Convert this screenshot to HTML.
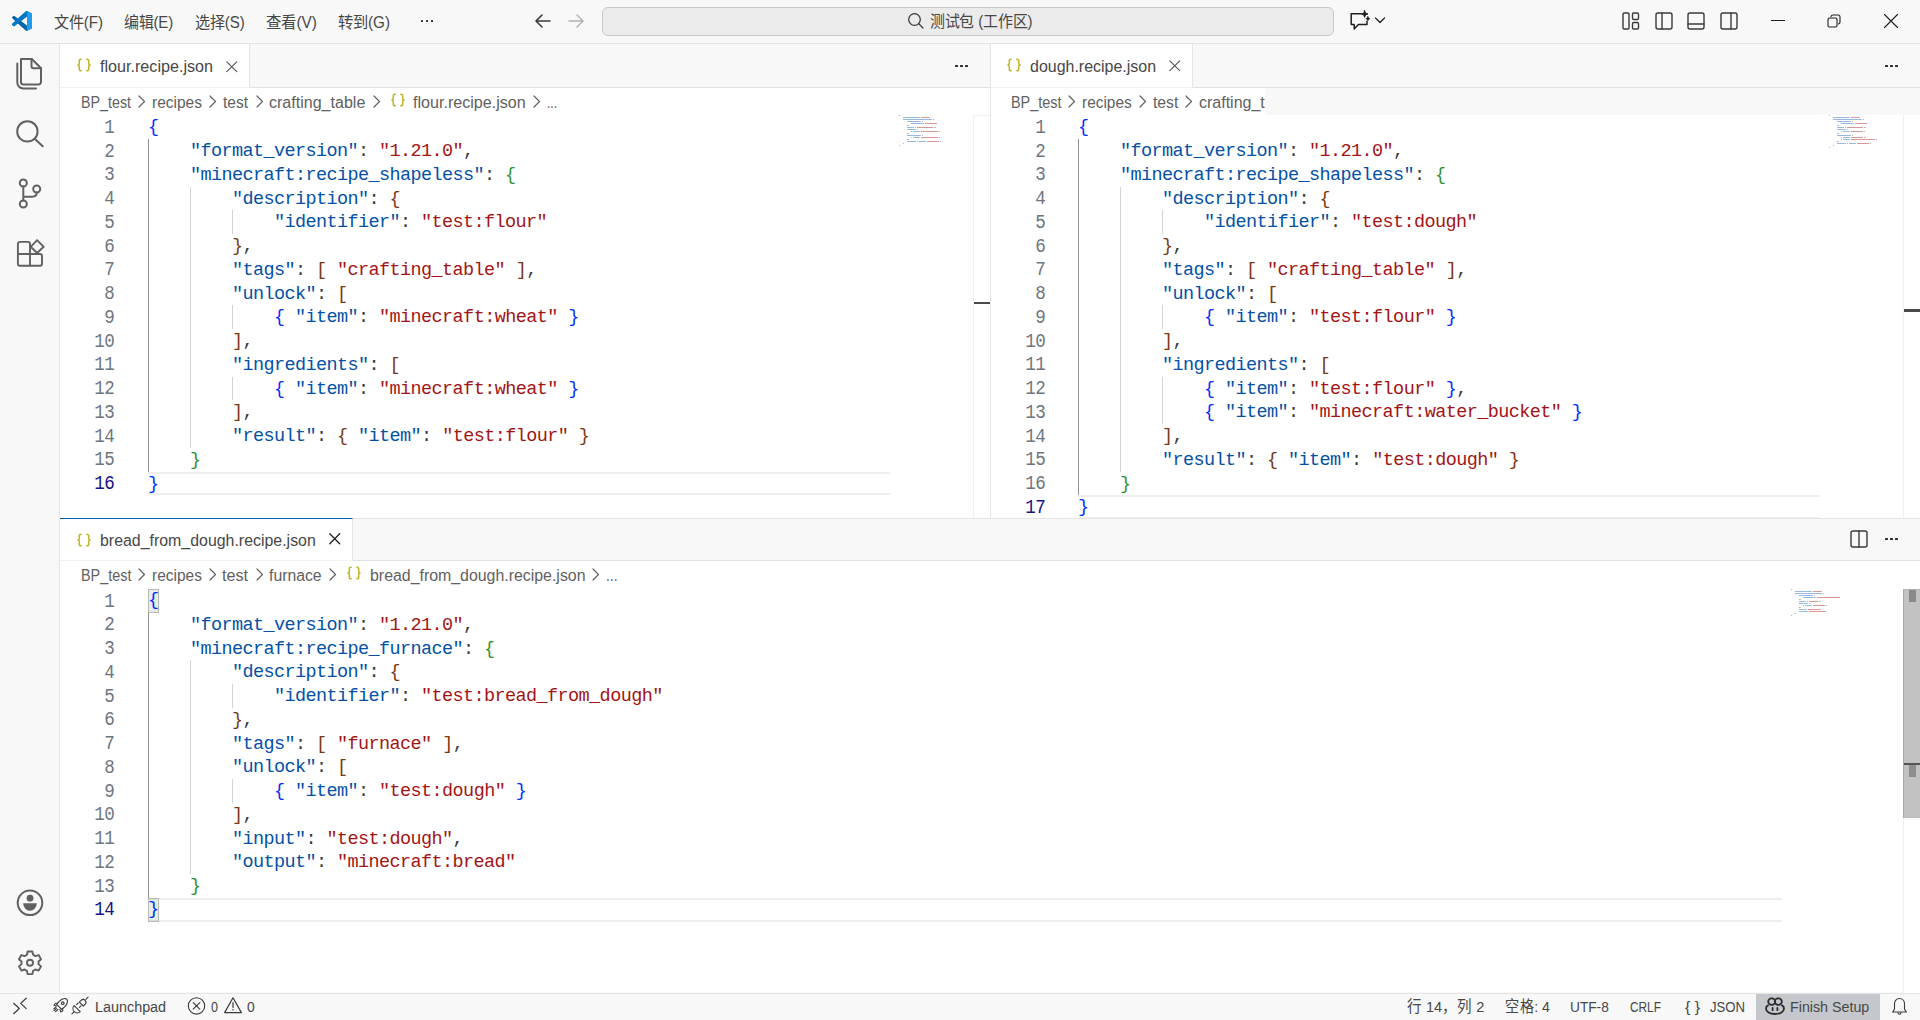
<!DOCTYPE html><html lang="zh-CN"><head><meta charset="utf-8"><style>
*{box-sizing:border-box;margin:0;padding:0}
html,body{width:1920px;height:1020px;overflow:hidden;background:#F8F8F8;font-family:"Liberation Sans",sans-serif;color:#3B3B3B}
.abs{position:absolute}
.t{position:absolute;white-space:pre;transform-origin:0 0}
#title{position:absolute;left:0;top:0;width:1920px;height:44px;background:#F8F8F8;border-bottom:1px solid #E5E5E5}
#act{position:absolute;left:0;top:44px;width:60px;height:949px;background:#F8F8F8;border-right:1px solid #E5E5E5}
#status{position:absolute;left:0;top:993px;width:1920px;height:27px;background:#F8F8F8;border-top:1px solid #E5E5E5}
.tabs{position:absolute;height:43px;background:#F8F8F8;border-bottom:1px solid #E2E2E2}
.tab{position:absolute;top:0;height:43px;background:#FFFFFF;border-right:1px solid #E5E5E5}
.crumbs{position:absolute;height:27px;background:#FFFFFF}
.ed{position:absolute;background:#FFFFFF;overflow:hidden}
.num{position:absolute;left:0;width:54.3px;text-align:right;font-family:"Liberation Mono",monospace;font-size:19.5px;letter-spacing:-0.6px;line-height:23.75px;height:23.75px;color:#6E7681;padding-top:1.5px;transform:scaleX(0.9);transform-origin:54.3px 0}
.num.act{color:#171184}
.guide{position:absolute;width:1px}
.code{position:absolute;font-family:"Liberation Mono",monospace;font-size:18.5px;letter-spacing:-0.6px;line-height:23.75px;white-space:pre;color:#3B3B3B;padding-top:1px}
.ln{height:23.75px}
.key{color:#0451A5}.str{color:#A31515}.p{color:#3B3B3B}
.br0{color:#0431FA}.br1{color:#319331}.br2{color:#7B3814}
.bm{display:inline-block;height:23.75px;vertical-align:top;margin-top:-1px;box-shadow:inset 0 0 0 1px #B9B9B9;background:rgba(0,100,0,0.1)}
.cl{position:absolute;border-top:2px solid #EEEEEE;border-bottom:2px solid #EEEEEE}
.ico{position:absolute;overflow:visible}
.dots{position:absolute;width:16px;height:4px}
.dots i{position:absolute;top:0;width:2.7px;height:2.7px;border-radius:0.6px;background:#2B2B2B}
</style></head><body><div id="title"><svg class="ico" style="left:12px;top:11px" width="20" height="20" viewBox="0 0 100 100"><path fill="#0065A9" d="M96.5 10.8 75.9.9a6.2 6.2 0 0 0-7.1 1.2L29.4 38 12.2 25a4.2 4.2 0 0 0-5.3.2L1.4 30.2a4.2 4.2 0 0 0 0 6.2L16.3 50 1.4 63.6a4.2 4.2 0 0 0 0 6.2l5.5 5a4.2 4.2 0 0 0 5.3.2l17.2-13L68.8 97.9a6.2 6.2 0 0 0 7.1 1.2l20.6-9.9A6.2 6.2 0 0 0 100 83.6V16.4a6.2 6.2 0 0 0-3.5-5.6ZM75 72.7 45.1 50 75 27.3Z"/><path fill="#007ACC" d="M96.5 10.8 75.9.9a6.2 6.2 0 0 0-7.1 1.2L1.4 63.6a4.2 4.2 0 0 0 0 6.2l5.5 5a4.2 4.2 0 0 0 5.3.2L93.4 13a4.2 4.2 0 0 1 6.6 3.4v-.2a6.2 6.2 0 0 0-3.5-5.4Z" opacity=".9"/><path fill="#1F9CF0" d="M75.9 99.1a6.2 6.2 0 0 1-7.1-1.2c2.3 2.3 6.2.7 6.2-2.6V4.7c0-3.3-3.9-4.9-6.2-2.6a6.2 6.2 0 0 1 7.1-1.2l20.6 9.9A6.2 6.2 0 0 1 100 16.4v67.2a6.2 6.2 0 0 1-3.5 5.6Z"/></svg><span class="t" style="left:54.00px;top:13.29px;font-size:16.25px;line-height:18.15px;color:#474747;transform:scaleX(0.9289);">文件(F)</span><span class="t" style="left:124.30px;top:13.29px;font-size:16.25px;line-height:18.15px;color:#474747;transform:scaleX(0.9185);">编辑(E)</span><span class="t" style="left:194.80px;top:13.29px;font-size:16.25px;line-height:18.15px;color:#474747;transform:scaleX(0.9279);">选择(S)</span><span class="t" style="left:265.80px;top:13.29px;font-size:16.25px;line-height:18.15px;color:#474747;transform:scaleX(0.9502);">查看(V)</span><span class="t" style="left:338.00px;top:13.29px;font-size:16.25px;line-height:18.15px;color:#474747;transform:scaleX(0.9375);">转到(G)</span><div class="dots" style="left:420.5px;top:19.5px"><i style="left:0"></i><i style="left:5px"></i><i style="left:10px"></i></div><svg class="ico" style="left:534px;top:13px" width="18" height="16" viewBox="0 0 18 16" fill="none" stroke="#3B3B3B" stroke-width="1.6" stroke-linecap="round" stroke-linejoin="round"><path d="M2 8h14M8 2 2 8l6 6"/></svg><svg class="ico" style="left:567px;top:13px" width="18" height="16" viewBox="0 0 18 16" fill="none" stroke="#B0B0B0" stroke-width="1.4" stroke-linecap="round" stroke-linejoin="round"><path d="M2 8h14M10 2l6 6-6 6"/></svg><div class="abs" style="left:602px;top:7px;width:732px;height:29px;border:1px solid #C9C9C9;border-radius:6px;background:#EBEBEB"></div><svg class="ico" style="left:907px;top:12px" width="17" height="18" viewBox="0 0 17 18" fill="none" stroke="#3B3B3B" stroke-width="1.3" stroke-linecap="round" stroke-linejoin="round"><circle cx="7.5" cy="7.5" r="5.8"/><path d="M11.8 11.8 16 16"/></svg><span class="t" style="left:930.40px;top:12.29px;font-size:16.25px;line-height:18.15px;color:#474747;transform:scaleX(0.9206);">测试包 (工作区)</span><svg class="ico" style="left:1349px;top:10px" width="24" height="22" viewBox="0 0 24 22" fill="none" stroke="#1F1F1F" stroke-width="1.5" stroke-linecap="round" stroke-linejoin="round"><path d="M11.8 3.8H2.2v10.6h3v4.5l4.2-4.5h8.6v-3.2"/><path d="M15.6.6l.9 2.5 2.5.9-2.5.9-.9 2.5-.9-2.5-2.5-.9 2.5-.9z" fill="#1F1F1F" stroke-width="0.9"/><path d="M18.9 6.6l.6 1.5 1.5.6-1.5.6-.6 1.5-.6-1.5-1.5-.6 1.5-.6z" fill="#1F1F1F" stroke-width="0.7"/></svg><svg class="ico" style="left:1374px;top:15px" width="12" height="10" viewBox="0 0 12 10" fill="none" stroke="#1F1F1F" stroke-width="1.2" stroke-linecap="round" stroke-linejoin="round"><path d="M1.5 3 6 7.5 10.5 3"/></svg><svg class="ico" style="left:1621px;top:11px" width="20" height="20" viewBox="0 0 20 20" fill="none" stroke="#3B3B3B" stroke-width="1.4" stroke-linecap="round" stroke-linejoin="round"><rect x="2" y="2" width="6" height="16" rx="1.2"/><rect x="11.5" y="2" width="6" height="6.5" rx="1.2"/><rect x="11.5" y="11.5" width="6" height="6.5" rx="1.2"/></svg><svg class="ico" style="left:1654px;top:11px" width="20" height="20" viewBox="0 0 20 20" fill="none" stroke="#3B3B3B" stroke-width="1.4" stroke-linecap="round" stroke-linejoin="round"><rect x="2" y="2" width="16" height="16" rx="2"/><path d="M8 2v16"/></svg><svg class="ico" style="left:1686px;top:11px" width="20" height="20" viewBox="0 0 20 20" fill="none" stroke="#3B3B3B" stroke-width="1.4" stroke-linecap="round" stroke-linejoin="round"><rect x="2" y="2" width="16" height="16" rx="2"/><path d="M2 13h16"/></svg><svg class="ico" style="left:1719px;top:11px" width="20" height="20" viewBox="0 0 20 20" fill="none" stroke="#3B3B3B" stroke-width="1.4" stroke-linecap="round" stroke-linejoin="round"><rect x="2" y="2" width="16" height="16" rx="2"/><path d="M12 2v16"/></svg><div class="abs" style="left:1771px;top:20px;width:14px;height:1px;background:#1F1F1F"></div><svg class="ico" style="left:1826px;top:13px" width="16" height="16" viewBox="0 0 16 16" fill="none" stroke="#1F1F1F" stroke-width="1.1" stroke-linecap="round" stroke-linejoin="round"><rect x="2" y="5" width="9" height="9" rx="1.5"/><path d="M5 3.5c.3-.9 1-1.5 2-1.5h5c1.1 0 2 .9 2 2v5c0 1-.6 1.7-1.5 2"/></svg><svg class="ico" style="left:1883px;top:13px" width="16" height="16" viewBox="0 0 16 16" fill="none" stroke="#1F1F1F" stroke-width="1.1" stroke-linecap="round" stroke-linejoin="round"><path d="M1.5 1.5l13 13M14.5 1.5l-13 13"/></svg></div><div id="act"><svg class="ico" style="left:15px;top:13px" width="30" height="34" viewBox="0 0 30 34" fill="none" stroke="#616161" stroke-width="2" stroke-linecap="round" stroke-linejoin="round"><path d="M6 2h10.8L26 11.2v13.8a2.5 2.5 0 0 1-2.5 2.5h-15a2.5 2.5 0 0 1-2.5-2.5z"/><path d="M16.5 2v7.3a2 2 0 0 0 2 2H26"/><path d="M2.3 6.5v19a6 6 0 0 0 6 6H21"/></svg><svg class="ico" style="left:14px;top:72px" width="32" height="32" viewBox="0 0 32 32" fill="none" stroke="#616161" stroke-width="2" stroke-linecap="round" stroke-linejoin="round"><circle cx="13.4" cy="15.4" r="10.2"/><path d="M20.7 22.7 28.7 30.2"/></svg><svg class="ico" style="left:14px;top:132px" width="32" height="34" viewBox="0 0 32 34" fill="none" stroke="#616161" stroke-width="2" stroke-linecap="round" stroke-linejoin="round"><circle cx="9.3" cy="7" r="3.5"/><circle cx="9.3" cy="28" r="3.5"/><circle cx="22.7" cy="13" r="3.5"/><path d="M9.3 10.5v14M22.7 16.5c0 2.5-1.5 4.2-4.5 4.2H9.3"/></svg><svg class="ico" style="left:14px;top:195px" width="32" height="32" viewBox="0 0 32 32" fill="none" stroke="#616161" stroke-width="1.9" stroke-linecap="round" stroke-linejoin="round"><path d="M16 15V4.9a2 2 0 0 0-2-2H5.9a2 2 0 0 0-2 2v19.8a2 2 0 0 0 2 2H26a2 2 0 0 0 2-2V17a2 2 0 0 0-2-2H3.9M16 15v11.7"/><path d="M23.1 1.2l6.6 6.6-6.6 6.2-6.4-6.2z"/></svg><svg class="ico" style="left:15px;top:843px" width="30" height="30" viewBox="0 0 30 30" fill="none" stroke="#616161" stroke-width="2" stroke-linecap="round" stroke-linejoin="round"><circle cx="15" cy="15.8" r="12.3"/><circle cx="15" cy="11.2" r="3.4" fill="#616161" stroke="none"/><path d="M8.2 16.2h13.6a6.8 7.6 0 0 1-13.6 0z" fill="#616161" stroke="none"/></svg><svg class="ico" style="left:15px;top:903px" width="30" height="32" viewBox="0 0 30 32" fill="none" stroke="#616161" stroke-width="1.9" stroke-linecap="round" stroke-linejoin="round"><path d="M11.92 7.77 L12.59 4.45 L17.41 4.45 L18.08 7.77 L20.41 9.12 L23.62 8.04 L26.03 12.22 L23.49 14.45 L23.49 17.15 L26.03 19.38 L23.62 23.56 L20.41 22.48 L18.08 23.83 L17.41 27.15 L12.59 27.15 L11.92 23.83 L9.59 22.48 L6.38 23.56 L3.97 19.38 L6.51 17.15 L6.51 14.45 L3.97 12.22 L6.38 8.04 L9.59 9.12Z"/><circle cx="15" cy="15.8" r="3"/></svg></div><div class="tabs" style="left:60px;top:44px;width:930px;height:44px"></div><div class="tab" style="left:60px;top:44px;width:190px;height:44px;border-bottom:1px solid #F3F3F3"></div><svg class="ico" style="left:77px;top:57.5px" width="14" height="14" viewBox="0 0 14 14" fill="none" stroke="#C2B62A" stroke-width="1.6" stroke-linecap="round" stroke-linejoin="round"><path d="M4.2 1.2c-1.3 0-1.9.6-1.9 1.9v2.2c0 .9-.4 1.5-1.3 1.7.9.2 1.3.8 1.3 1.7v2.2c0 1.3.6 1.9 1.9 1.9M9.8 1.2c1.3 0 1.9.6 1.9 1.9v2.2c0 .9.4 1.5 1.3 1.7-.9.2-1.3.8-1.3 1.7v2.2c0 1.3-.6 1.9-1.9 1.9"/></svg><span class="t" style="left:100.00px;top:57.29px;font-size:16.25px;line-height:18.15px;color:#474747;transform:scaleX(0.9927);">flour.recipe.json</span><svg class="ico" style="left:225.5px;top:60.5px" width="11.5" height="11.5" viewBox="0 0 11.5 11.5" fill="none" stroke="#555555" stroke-width="1.1" stroke-linecap="round" stroke-linejoin="round"><path d="M.8 .8l9.9 9.9M10.7 .8l-9.9 9.9"/></svg><div class="dots" style="left:955px;top:64.5px"><i style="left:0"></i><i style="left:5px"></i><i style="left:10px"></i></div><div class="crumbs" style="left:60px;top:88px;width:930px;height:27.25px"></div><span class="t" style="left:81.00px;top:93.52px;font-size:16px;line-height:17.87px;color:#616161;transform:scaleX(0.8924);">BP_test</span><svg class="ico" style="left:138px;top:94.5px" width="8" height="13" viewBox="0 0 8 13" fill="none" stroke="#616161" stroke-width="1.2" stroke-linecap="round" stroke-linejoin="round"><path d="M1 1l5.5 5.5L1 12"/></svg><span class="t" style="left:151.70px;top:93.52px;font-size:16px;line-height:17.87px;color:#616161;transform:scaleX(0.9694);">recipes</span><svg class="ico" style="left:209px;top:94.5px" width="8" height="13" viewBox="0 0 8 13" fill="none" stroke="#616161" stroke-width="1.2" stroke-linecap="round" stroke-linejoin="round"><path d="M1 1l5.5 5.5L1 12"/></svg><span class="t" style="left:222.70px;top:93.52px;font-size:16px;line-height:17.87px;color:#616161;transform:scaleX(0.9691);">test</span><svg class="ico" style="left:256px;top:94.5px" width="8" height="13" viewBox="0 0 8 13" fill="none" stroke="#616161" stroke-width="1.2" stroke-linecap="round" stroke-linejoin="round"><path d="M1 1l5.5 5.5L1 12"/></svg><span class="t" style="left:268.70px;top:93.52px;font-size:16px;line-height:17.87px;color:#616161;transform:scaleX(1.0025);">crafting_table</span><svg class="ico" style="left:372.7px;top:94.5px" width="8" height="13" viewBox="0 0 8 13" fill="none" stroke="#616161" stroke-width="1.2" stroke-linecap="round" stroke-linejoin="round"><path d="M1 1l5.5 5.5L1 12"/></svg><svg class="ico" style="left:390.7px;top:93px" width="14" height="14" viewBox="0 0 14 14" fill="none" stroke="#C2B62A" stroke-width="1.6" stroke-linecap="round" stroke-linejoin="round"><path d="M4.2 1.2c-1.3 0-1.9.6-1.9 1.9v2.2c0 .9-.4 1.5-1.3 1.7.9.2 1.3.8 1.3 1.7v2.2c0 1.3.6 1.9 1.9 1.9M9.8 1.2c1.3 0 1.9.6 1.9 1.9v2.2c0 .9.4 1.5 1.3 1.7-.9.2-1.3.8-1.3 1.7v2.2c0 1.3-.6 1.9-1.9 1.9"/></svg><span class="t" style="left:413.30px;top:93.52px;font-size:16px;line-height:17.87px;color:#616161;transform:scaleX(1.0057);">flour.recipe.json</span><svg class="ico" style="left:533px;top:94.5px" width="8" height="13" viewBox="0 0 8 13" fill="none" stroke="#616161" stroke-width="1.2" stroke-linecap="round" stroke-linejoin="round"><path d="M1 1l5.5 5.5L1 12"/></svg><span class="t" style="left:547.30px;top:93.52px;font-size:16px;line-height:17.87px;color:#616161;transform:scaleX(0.7494);">...</span><div class="ed" style="left:60px;top:115.25px;width:913px;height:403px"><div class="cl" style="left:88px;top:356.25px;width:742px;height:23.75px"></div><div class="num" style="top:0.00px">1</div><div class="num" style="top:23.75px">2</div><div class="num" style="top:47.50px">3</div><div class="num" style="top:71.25px">4</div><div class="num" style="top:95.00px">5</div><div class="num" style="top:118.75px">6</div><div class="num" style="top:142.50px">7</div><div class="num" style="top:166.25px">8</div><div class="num" style="top:190.00px">9</div><div class="num" style="top:213.75px">10</div><div class="num" style="top:237.50px">11</div><div class="num" style="top:261.25px">12</div><div class="num" style="top:285.00px">13</div><div class="num" style="top:308.75px">14</div><div class="num" style="top:332.50px">15</div><div class="num act" style="top:356.25px">16</div><div class="guide" style="left:88.00px;top:23.75px;height:332.50px;background:#939393"></div><div class="guide" style="left:130.00px;top:71.25px;height:261.25px;background:#D3D3D3"></div><div class="guide" style="left:172.00px;top:95.00px;height:23.75px;background:#D3D3D3"></div><div class="guide" style="left:172.00px;top:190.00px;height:23.75px;background:#D3D3D3"></div><div class="guide" style="left:172.00px;top:261.25px;height:23.75px;background:#D3D3D3"></div><div class="code" style="left:88px;top:0"><div class="ln"><span class="br0">{</span></div><div class="ln">    <span class="key">&quot;format_version&quot;</span><span class="p">:</span> <span class="str">&quot;1.21.0&quot;</span><span class="p">,</span></div><div class="ln">    <span class="key">&quot;minecraft:recipe_shapeless&quot;</span><span class="p">:</span> <span class="br1">{</span></div><div class="ln">        <span class="key">&quot;description&quot;</span><span class="p">:</span> <span class="br2">{</span></div><div class="ln">            <span class="key">&quot;identifier&quot;</span><span class="p">:</span> <span class="str">&quot;test:flour&quot;</span></div><div class="ln">        <span class="br2">}</span><span class="p">,</span></div><div class="ln">        <span class="key">&quot;tags&quot;</span><span class="p">:</span> <span class="br2">[</span> <span class="str">&quot;crafting_table&quot;</span> <span class="br2">]</span><span class="p">,</span></div><div class="ln">        <span class="key">&quot;unlock&quot;</span><span class="p">:</span> <span class="br2">[</span></div><div class="ln">            <span class="br0">{</span> <span class="key">&quot;item&quot;</span><span class="p">:</span> <span class="str">&quot;minecraft:wheat&quot;</span> <span class="br0">}</span></div><div class="ln">        <span class="br2">]</span><span class="p">,</span></div><div class="ln">        <span class="key">&quot;ingredients&quot;</span><span class="p">:</span> <span class="br2">[</span></div><div class="ln">            <span class="br0">{</span> <span class="key">&quot;item&quot;</span><span class="p">:</span> <span class="str">&quot;minecraft:wheat&quot;</span> <span class="br0">}</span></div><div class="ln">        <span class="br2">]</span><span class="p">,</span></div><div class="ln">        <span class="key">&quot;result&quot;</span><span class="p">:</span> <span class="br2">{</span> <span class="key">&quot;item&quot;</span><span class="p">:</span> <span class="str">&quot;test:flour&quot;</span> <span class="br2">}</span></div><div class="ln">    <span class="br1">}</span></div><div class="ln"><span class="br0">}</span></div></div></div><svg class="ico" style="left:899px;top:115px" width="60" height="32" shape-rendering="crispEdges"><rect x="0" y="0.2" width="0.9" height="1" fill="#444" opacity="0.4"/><rect x="4" y="2.2" width="0.9" height="1" fill="#2E6FC4" opacity="0.5"/><rect x="5" y="2.2" width="0.9" height="1" fill="#2E6FC4" opacity="0.5"/><rect x="6" y="2.2" width="0.9" height="1" fill="#2E6FC4" opacity="0.5"/><rect x="7" y="2.2" width="0.9" height="1" fill="#2E6FC4" opacity="0.5"/><rect x="8" y="2.2" width="0.9" height="1" fill="#2E6FC4" opacity="0.5"/><rect x="9" y="2.2" width="0.9" height="1" fill="#2E6FC4" opacity="0.5"/><rect x="10" y="2.2" width="0.9" height="1" fill="#2E6FC4" opacity="0.5"/><rect x="11" y="2.2" width="0.9" height="1" fill="#2E6FC4" opacity="0.5"/><rect x="12" y="2.2" width="0.9" height="1" fill="#2E6FC4" opacity="0.5"/><rect x="13" y="2.2" width="0.9" height="1" fill="#2E6FC4" opacity="0.5"/><rect x="14" y="2.2" width="0.9" height="1" fill="#2E6FC4" opacity="0.5"/><rect x="15" y="2.2" width="0.9" height="1" fill="#2E6FC4" opacity="0.5"/><rect x="16" y="2.2" width="0.9" height="1" fill="#2E6FC4" opacity="0.5"/><rect x="17" y="2.2" width="0.9" height="1" fill="#2E6FC4" opacity="0.5"/><rect x="18" y="2.2" width="0.9" height="1" fill="#2E6FC4" opacity="0.5"/><rect x="19" y="2.2" width="0.9" height="1" fill="#2E6FC4" opacity="0.5"/><rect x="20" y="2.2" width="0.9" height="1" fill="#666" opacity="0.4"/><rect x="22" y="2.2" width="0.9" height="1" fill="#B03030" opacity="0.5"/><rect x="23" y="2.2" width="0.9" height="1" fill="#B03030" opacity="0.5"/><rect x="24" y="2.2" width="0.9" height="1" fill="#B03030" opacity="0.5"/><rect x="25" y="2.2" width="0.9" height="1" fill="#B03030" opacity="0.5"/><rect x="26" y="2.2" width="0.9" height="1" fill="#B03030" opacity="0.5"/><rect x="27" y="2.2" width="0.9" height="1" fill="#B03030" opacity="0.5"/><rect x="28" y="2.2" width="0.9" height="1" fill="#B03030" opacity="0.5"/><rect x="29" y="2.2" width="0.9" height="1" fill="#B03030" opacity="0.5"/><rect x="30" y="2.2" width="0.9" height="1" fill="#666" opacity="0.4"/><rect x="4" y="4.2" width="0.9" height="1" fill="#2E6FC4" opacity="0.5"/><rect x="5" y="4.2" width="0.9" height="1" fill="#2E6FC4" opacity="0.5"/><rect x="6" y="4.2" width="0.9" height="1" fill="#2E6FC4" opacity="0.5"/><rect x="7" y="4.2" width="0.9" height="1" fill="#2E6FC4" opacity="0.5"/><rect x="8" y="4.2" width="0.9" height="1" fill="#2E6FC4" opacity="0.5"/><rect x="9" y="4.2" width="0.9" height="1" fill="#2E6FC4" opacity="0.5"/><rect x="10" y="4.2" width="0.9" height="1" fill="#2E6FC4" opacity="0.5"/><rect x="11" y="4.2" width="0.9" height="1" fill="#2E6FC4" opacity="0.5"/><rect x="12" y="4.2" width="0.9" height="1" fill="#2E6FC4" opacity="0.5"/><rect x="13" y="4.2" width="0.9" height="1" fill="#2E6FC4" opacity="0.5"/><rect x="14" y="4.2" width="0.9" height="1" fill="#2E6FC4" opacity="0.5"/><rect x="15" y="4.2" width="0.9" height="1" fill="#2E6FC4" opacity="0.5"/><rect x="16" y="4.2" width="0.9" height="1" fill="#2E6FC4" opacity="0.5"/><rect x="17" y="4.2" width="0.9" height="1" fill="#2E6FC4" opacity="0.5"/><rect x="18" y="4.2" width="0.9" height="1" fill="#2E6FC4" opacity="0.5"/><rect x="19" y="4.2" width="0.9" height="1" fill="#2E6FC4" opacity="0.5"/><rect x="20" y="4.2" width="0.9" height="1" fill="#2E6FC4" opacity="0.5"/><rect x="21" y="4.2" width="0.9" height="1" fill="#2E6FC4" opacity="0.5"/><rect x="22" y="4.2" width="0.9" height="1" fill="#2E6FC4" opacity="0.5"/><rect x="23" y="4.2" width="0.9" height="1" fill="#2E6FC4" opacity="0.5"/><rect x="24" y="4.2" width="0.9" height="1" fill="#2E6FC4" opacity="0.5"/><rect x="25" y="4.2" width="0.9" height="1" fill="#2E6FC4" opacity="0.5"/><rect x="26" y="4.2" width="0.9" height="1" fill="#2E6FC4" opacity="0.5"/><rect x="27" y="4.2" width="0.9" height="1" fill="#2E6FC4" opacity="0.5"/><rect x="28" y="4.2" width="0.9" height="1" fill="#2E6FC4" opacity="0.5"/><rect x="29" y="4.2" width="0.9" height="1" fill="#2E6FC4" opacity="0.5"/><rect x="30" y="4.2" width="0.9" height="1" fill="#2E6FC4" opacity="0.5"/><rect x="31" y="4.2" width="0.9" height="1" fill="#2E6FC4" opacity="0.5"/><rect x="32" y="4.2" width="0.9" height="1" fill="#666" opacity="0.4"/><rect x="34" y="4.2" width="0.9" height="1" fill="#444" opacity="0.4"/><rect x="8" y="6.2" width="0.9" height="1" fill="#2E6FC4" opacity="0.5"/><rect x="9" y="6.2" width="0.9" height="1" fill="#2E6FC4" opacity="0.5"/><rect x="10" y="6.2" width="0.9" height="1" fill="#2E6FC4" opacity="0.5"/><rect x="11" y="6.2" width="0.9" height="1" fill="#2E6FC4" opacity="0.5"/><rect x="12" y="6.2" width="0.9" height="1" fill="#2E6FC4" opacity="0.5"/><rect x="13" y="6.2" width="0.9" height="1" fill="#2E6FC4" opacity="0.5"/><rect x="14" y="6.2" width="0.9" height="1" fill="#2E6FC4" opacity="0.5"/><rect x="15" y="6.2" width="0.9" height="1" fill="#2E6FC4" opacity="0.5"/><rect x="16" y="6.2" width="0.9" height="1" fill="#2E6FC4" opacity="0.5"/><rect x="17" y="6.2" width="0.9" height="1" fill="#2E6FC4" opacity="0.5"/><rect x="18" y="6.2" width="0.9" height="1" fill="#2E6FC4" opacity="0.5"/><rect x="19" y="6.2" width="0.9" height="1" fill="#2E6FC4" opacity="0.5"/><rect x="20" y="6.2" width="0.9" height="1" fill="#2E6FC4" opacity="0.5"/><rect x="21" y="6.2" width="0.9" height="1" fill="#666" opacity="0.4"/><rect x="23" y="6.2" width="0.9" height="1" fill="#444" opacity="0.4"/><rect x="12" y="8.2" width="0.9" height="1" fill="#2E6FC4" opacity="0.5"/><rect x="13" y="8.2" width="0.9" height="1" fill="#2E6FC4" opacity="0.5"/><rect x="14" y="8.2" width="0.9" height="1" fill="#2E6FC4" opacity="0.5"/><rect x="15" y="8.2" width="0.9" height="1" fill="#2E6FC4" opacity="0.5"/><rect x="16" y="8.2" width="0.9" height="1" fill="#2E6FC4" opacity="0.5"/><rect x="17" y="8.2" width="0.9" height="1" fill="#2E6FC4" opacity="0.5"/><rect x="18" y="8.2" width="0.9" height="1" fill="#2E6FC4" opacity="0.5"/><rect x="19" y="8.2" width="0.9" height="1" fill="#2E6FC4" opacity="0.5"/><rect x="20" y="8.2" width="0.9" height="1" fill="#2E6FC4" opacity="0.5"/><rect x="21" y="8.2" width="0.9" height="1" fill="#2E6FC4" opacity="0.5"/><rect x="22" y="8.2" width="0.9" height="1" fill="#2E6FC4" opacity="0.5"/><rect x="23" y="8.2" width="0.9" height="1" fill="#2E6FC4" opacity="0.5"/><rect x="24" y="8.2" width="0.9" height="1" fill="#666" opacity="0.4"/><rect x="26" y="8.2" width="0.9" height="1" fill="#B03030" opacity="0.5"/><rect x="27" y="8.2" width="0.9" height="1" fill="#B03030" opacity="0.5"/><rect x="28" y="8.2" width="0.9" height="1" fill="#B03030" opacity="0.5"/><rect x="29" y="8.2" width="0.9" height="1" fill="#B03030" opacity="0.5"/><rect x="30" y="8.2" width="0.9" height="1" fill="#B03030" opacity="0.5"/><rect x="31" y="8.2" width="0.9" height="1" fill="#B03030" opacity="0.5"/><rect x="32" y="8.2" width="0.9" height="1" fill="#B03030" opacity="0.5"/><rect x="33" y="8.2" width="0.9" height="1" fill="#B03030" opacity="0.5"/><rect x="34" y="8.2" width="0.9" height="1" fill="#B03030" opacity="0.5"/><rect x="35" y="8.2" width="0.9" height="1" fill="#B03030" opacity="0.5"/><rect x="36" y="8.2" width="0.9" height="1" fill="#B03030" opacity="0.5"/><rect x="37" y="8.2" width="0.9" height="1" fill="#B03030" opacity="0.5"/><rect x="8" y="10.2" width="0.9" height="1" fill="#444" opacity="0.4"/><rect x="9" y="10.2" width="0.9" height="1" fill="#666" opacity="0.4"/><rect x="8" y="12.2" width="0.9" height="1" fill="#2E6FC4" opacity="0.5"/><rect x="9" y="12.2" width="0.9" height="1" fill="#2E6FC4" opacity="0.5"/><rect x="10" y="12.2" width="0.9" height="1" fill="#2E6FC4" opacity="0.5"/><rect x="11" y="12.2" width="0.9" height="1" fill="#2E6FC4" opacity="0.5"/><rect x="12" y="12.2" width="0.9" height="1" fill="#2E6FC4" opacity="0.5"/><rect x="13" y="12.2" width="0.9" height="1" fill="#2E6FC4" opacity="0.5"/><rect x="14" y="12.2" width="0.9" height="1" fill="#666" opacity="0.4"/><rect x="16" y="12.2" width="0.9" height="1" fill="#444" opacity="0.4"/><rect x="18" y="12.2" width="0.9" height="1" fill="#B03030" opacity="0.5"/><rect x="19" y="12.2" width="0.9" height="1" fill="#B03030" opacity="0.5"/><rect x="20" y="12.2" width="0.9" height="1" fill="#B03030" opacity="0.5"/><rect x="21" y="12.2" width="0.9" height="1" fill="#B03030" opacity="0.5"/><rect x="22" y="12.2" width="0.9" height="1" fill="#B03030" opacity="0.5"/><rect x="23" y="12.2" width="0.9" height="1" fill="#B03030" opacity="0.5"/><rect x="24" y="12.2" width="0.9" height="1" fill="#B03030" opacity="0.5"/><rect x="25" y="12.2" width="0.9" height="1" fill="#B03030" opacity="0.5"/><rect x="26" y="12.2" width="0.9" height="1" fill="#B03030" opacity="0.5"/><rect x="27" y="12.2" width="0.9" height="1" fill="#B03030" opacity="0.5"/><rect x="28" y="12.2" width="0.9" height="1" fill="#B03030" opacity="0.5"/><rect x="29" y="12.2" width="0.9" height="1" fill="#B03030" opacity="0.5"/><rect x="30" y="12.2" width="0.9" height="1" fill="#B03030" opacity="0.5"/><rect x="31" y="12.2" width="0.9" height="1" fill="#B03030" opacity="0.5"/><rect x="32" y="12.2" width="0.9" height="1" fill="#B03030" opacity="0.5"/><rect x="33" y="12.2" width="0.9" height="1" fill="#B03030" opacity="0.5"/><rect x="35" y="12.2" width="0.9" height="1" fill="#444" opacity="0.4"/><rect x="36" y="12.2" width="0.9" height="1" fill="#666" opacity="0.4"/><rect x="8" y="14.2" width="0.9" height="1" fill="#2E6FC4" opacity="0.5"/><rect x="9" y="14.2" width="0.9" height="1" fill="#2E6FC4" opacity="0.5"/><rect x="10" y="14.2" width="0.9" height="1" fill="#2E6FC4" opacity="0.5"/><rect x="11" y="14.2" width="0.9" height="1" fill="#2E6FC4" opacity="0.5"/><rect x="12" y="14.2" width="0.9" height="1" fill="#2E6FC4" opacity="0.5"/><rect x="13" y="14.2" width="0.9" height="1" fill="#2E6FC4" opacity="0.5"/><rect x="14" y="14.2" width="0.9" height="1" fill="#2E6FC4" opacity="0.5"/><rect x="15" y="14.2" width="0.9" height="1" fill="#2E6FC4" opacity="0.5"/><rect x="16" y="14.2" width="0.9" height="1" fill="#666" opacity="0.4"/><rect x="18" y="14.2" width="0.9" height="1" fill="#444" opacity="0.4"/><rect x="12" y="16.2" width="0.9" height="1" fill="#444" opacity="0.4"/><rect x="14" y="16.2" width="0.9" height="1" fill="#2E6FC4" opacity="0.5"/><rect x="15" y="16.2" width="0.9" height="1" fill="#2E6FC4" opacity="0.5"/><rect x="16" y="16.2" width="0.9" height="1" fill="#2E6FC4" opacity="0.5"/><rect x="17" y="16.2" width="0.9" height="1" fill="#2E6FC4" opacity="0.5"/><rect x="18" y="16.2" width="0.9" height="1" fill="#2E6FC4" opacity="0.5"/><rect x="19" y="16.2" width="0.9" height="1" fill="#2E6FC4" opacity="0.5"/><rect x="20" y="16.2" width="0.9" height="1" fill="#666" opacity="0.4"/><rect x="22" y="16.2" width="0.9" height="1" fill="#B03030" opacity="0.5"/><rect x="23" y="16.2" width="0.9" height="1" fill="#B03030" opacity="0.5"/><rect x="24" y="16.2" width="0.9" height="1" fill="#B03030" opacity="0.5"/><rect x="25" y="16.2" width="0.9" height="1" fill="#B03030" opacity="0.5"/><rect x="26" y="16.2" width="0.9" height="1" fill="#B03030" opacity="0.5"/><rect x="27" y="16.2" width="0.9" height="1" fill="#B03030" opacity="0.5"/><rect x="28" y="16.2" width="0.9" height="1" fill="#B03030" opacity="0.5"/><rect x="29" y="16.2" width="0.9" height="1" fill="#B03030" opacity="0.5"/><rect x="30" y="16.2" width="0.9" height="1" fill="#B03030" opacity="0.5"/><rect x="31" y="16.2" width="0.9" height="1" fill="#B03030" opacity="0.5"/><rect x="32" y="16.2" width="0.9" height="1" fill="#B03030" opacity="0.5"/><rect x="33" y="16.2" width="0.9" height="1" fill="#B03030" opacity="0.5"/><rect x="34" y="16.2" width="0.9" height="1" fill="#B03030" opacity="0.5"/><rect x="35" y="16.2" width="0.9" height="1" fill="#B03030" opacity="0.5"/><rect x="36" y="16.2" width="0.9" height="1" fill="#B03030" opacity="0.5"/><rect x="37" y="16.2" width="0.9" height="1" fill="#B03030" opacity="0.5"/><rect x="38" y="16.2" width="0.9" height="1" fill="#B03030" opacity="0.5"/><rect x="40" y="16.2" width="0.9" height="1" fill="#444" opacity="0.4"/><rect x="8" y="18.2" width="0.9" height="1" fill="#444" opacity="0.4"/><rect x="9" y="18.2" width="0.9" height="1" fill="#666" opacity="0.4"/><rect x="8" y="20.2" width="0.9" height="1" fill="#2E6FC4" opacity="0.5"/><rect x="9" y="20.2" width="0.9" height="1" fill="#2E6FC4" opacity="0.5"/><rect x="10" y="20.2" width="0.9" height="1" fill="#2E6FC4" opacity="0.5"/><rect x="11" y="20.2" width="0.9" height="1" fill="#2E6FC4" opacity="0.5"/><rect x="12" y="20.2" width="0.9" height="1" fill="#2E6FC4" opacity="0.5"/><rect x="13" y="20.2" width="0.9" height="1" fill="#2E6FC4" opacity="0.5"/><rect x="14" y="20.2" width="0.9" height="1" fill="#2E6FC4" opacity="0.5"/><rect x="15" y="20.2" width="0.9" height="1" fill="#2E6FC4" opacity="0.5"/><rect x="16" y="20.2" width="0.9" height="1" fill="#2E6FC4" opacity="0.5"/><rect x="17" y="20.2" width="0.9" height="1" fill="#2E6FC4" opacity="0.5"/><rect x="18" y="20.2" width="0.9" height="1" fill="#2E6FC4" opacity="0.5"/><rect x="19" y="20.2" width="0.9" height="1" fill="#2E6FC4" opacity="0.5"/><rect x="20" y="20.2" width="0.9" height="1" fill="#2E6FC4" opacity="0.5"/><rect x="21" y="20.2" width="0.9" height="1" fill="#666" opacity="0.4"/><rect x="23" y="20.2" width="0.9" height="1" fill="#444" opacity="0.4"/><rect x="12" y="22.2" width="0.9" height="1" fill="#444" opacity="0.4"/><rect x="14" y="22.2" width="0.9" height="1" fill="#2E6FC4" opacity="0.5"/><rect x="15" y="22.2" width="0.9" height="1" fill="#2E6FC4" opacity="0.5"/><rect x="16" y="22.2" width="0.9" height="1" fill="#2E6FC4" opacity="0.5"/><rect x="17" y="22.2" width="0.9" height="1" fill="#2E6FC4" opacity="0.5"/><rect x="18" y="22.2" width="0.9" height="1" fill="#2E6FC4" opacity="0.5"/><rect x="19" y="22.2" width="0.9" height="1" fill="#2E6FC4" opacity="0.5"/><rect x="20" y="22.2" width="0.9" height="1" fill="#666" opacity="0.4"/><rect x="22" y="22.2" width="0.9" height="1" fill="#B03030" opacity="0.5"/><rect x="23" y="22.2" width="0.9" height="1" fill="#B03030" opacity="0.5"/><rect x="24" y="22.2" width="0.9" height="1" fill="#B03030" opacity="0.5"/><rect x="25" y="22.2" width="0.9" height="1" fill="#B03030" opacity="0.5"/><rect x="26" y="22.2" width="0.9" height="1" fill="#B03030" opacity="0.5"/><rect x="27" y="22.2" width="0.9" height="1" fill="#B03030" opacity="0.5"/><rect x="28" y="22.2" width="0.9" height="1" fill="#B03030" opacity="0.5"/><rect x="29" y="22.2" width="0.9" height="1" fill="#B03030" opacity="0.5"/><rect x="30" y="22.2" width="0.9" height="1" fill="#B03030" opacity="0.5"/><rect x="31" y="22.2" width="0.9" height="1" fill="#B03030" opacity="0.5"/><rect x="32" y="22.2" width="0.9" height="1" fill="#B03030" opacity="0.5"/><rect x="33" y="22.2" width="0.9" height="1" fill="#B03030" opacity="0.5"/><rect x="34" y="22.2" width="0.9" height="1" fill="#B03030" opacity="0.5"/><rect x="35" y="22.2" width="0.9" height="1" fill="#B03030" opacity="0.5"/><rect x="36" y="22.2" width="0.9" height="1" fill="#B03030" opacity="0.5"/><rect x="37" y="22.2" width="0.9" height="1" fill="#B03030" opacity="0.5"/><rect x="38" y="22.2" width="0.9" height="1" fill="#B03030" opacity="0.5"/><rect x="40" y="22.2" width="0.9" height="1" fill="#444" opacity="0.4"/><rect x="8" y="24.2" width="0.9" height="1" fill="#444" opacity="0.4"/><rect x="9" y="24.2" width="0.9" height="1" fill="#666" opacity="0.4"/><rect x="8" y="26.2" width="0.9" height="1" fill="#2E6FC4" opacity="0.5"/><rect x="9" y="26.2" width="0.9" height="1" fill="#2E6FC4" opacity="0.5"/><rect x="10" y="26.2" width="0.9" height="1" fill="#2E6FC4" opacity="0.5"/><rect x="11" y="26.2" width="0.9" height="1" fill="#2E6FC4" opacity="0.5"/><rect x="12" y="26.2" width="0.9" height="1" fill="#2E6FC4" opacity="0.5"/><rect x="13" y="26.2" width="0.9" height="1" fill="#2E6FC4" opacity="0.5"/><rect x="14" y="26.2" width="0.9" height="1" fill="#2E6FC4" opacity="0.5"/><rect x="15" y="26.2" width="0.9" height="1" fill="#2E6FC4" opacity="0.5"/><rect x="16" y="26.2" width="0.9" height="1" fill="#666" opacity="0.4"/><rect x="18" y="26.2" width="0.9" height="1" fill="#444" opacity="0.4"/><rect x="20" y="26.2" width="0.9" height="1" fill="#2E6FC4" opacity="0.5"/><rect x="21" y="26.2" width="0.9" height="1" fill="#2E6FC4" opacity="0.5"/><rect x="22" y="26.2" width="0.9" height="1" fill="#2E6FC4" opacity="0.5"/><rect x="23" y="26.2" width="0.9" height="1" fill="#2E6FC4" opacity="0.5"/><rect x="24" y="26.2" width="0.9" height="1" fill="#2E6FC4" opacity="0.5"/><rect x="25" y="26.2" width="0.9" height="1" fill="#2E6FC4" opacity="0.5"/><rect x="26" y="26.2" width="0.9" height="1" fill="#666" opacity="0.4"/><rect x="28" y="26.2" width="0.9" height="1" fill="#B03030" opacity="0.5"/><rect x="29" y="26.2" width="0.9" height="1" fill="#B03030" opacity="0.5"/><rect x="30" y="26.2" width="0.9" height="1" fill="#B03030" opacity="0.5"/><rect x="31" y="26.2" width="0.9" height="1" fill="#B03030" opacity="0.5"/><rect x="32" y="26.2" width="0.9" height="1" fill="#B03030" opacity="0.5"/><rect x="33" y="26.2" width="0.9" height="1" fill="#B03030" opacity="0.5"/><rect x="34" y="26.2" width="0.9" height="1" fill="#B03030" opacity="0.5"/><rect x="35" y="26.2" width="0.9" height="1" fill="#B03030" opacity="0.5"/><rect x="36" y="26.2" width="0.9" height="1" fill="#B03030" opacity="0.5"/><rect x="37" y="26.2" width="0.9" height="1" fill="#B03030" opacity="0.5"/><rect x="38" y="26.2" width="0.9" height="1" fill="#B03030" opacity="0.5"/><rect x="39" y="26.2" width="0.9" height="1" fill="#B03030" opacity="0.5"/><rect x="41" y="26.2" width="0.9" height="1" fill="#444" opacity="0.4"/><rect x="4" y="28.2" width="0.9" height="1" fill="#444" opacity="0.4"/><rect x="0" y="30.2" width="0.9" height="1" fill="#444" opacity="0.4"/></svg><div class="abs" style="left:973px;top:115px;width:17px;height:1px;background:#F0F0F0"></div><div class="abs" style="left:973px;top:115px;width:1px;height:403px;background:#F0F0F0"></div><div class="abs" style="left:974px;top:116px;width:16px;height:402px;background:#FFFFFF"></div><div class="abs" style="left:974px;top:302px;width:16px;height:2px;background:#4A4A4A"></div><div class="abs" style="left:990px;top:44px;width:1px;height:475px;background:#E5E5E5"></div><div class="tabs" style="left:991px;top:44px;width:929px;height:44px"></div><div class="tab" style="left:991px;top:44px;width:202px;height:44px;border-bottom:1px solid #F3F3F3"></div><svg class="ico" style="left:1007px;top:57.5px" width="14" height="14" viewBox="0 0 14 14" fill="none" stroke="#C2B62A" stroke-width="1.6" stroke-linecap="round" stroke-linejoin="round"><path d="M4.2 1.2c-1.3 0-1.9.6-1.9 1.9v2.2c0 .9-.4 1.5-1.3 1.7.9.2 1.3.8 1.3 1.7v2.2c0 1.3.6 1.9 1.9 1.9M9.8 1.2c1.3 0 1.9.6 1.9 1.9v2.2c0 .9.4 1.5 1.3 1.7-.9.2-1.3.8-1.3 1.7v2.2c0 1.3-.6 1.9-1.9 1.9"/></svg><span class="t" style="left:1030.30px;top:57.29px;font-size:16.25px;line-height:18.15px;color:#474747;transform:scaleX(0.9829);">dough.recipe.json</span><svg class="ico" style="left:1168.8px;top:59.8px" width="11.5" height="11.5" viewBox="0 0 11.5 11.5" fill="none" stroke="#555555" stroke-width="1.1" stroke-linecap="round" stroke-linejoin="round"><path d="M.8 .8l9.9 9.9M10.7 .8l-9.9 9.9"/></svg><div class="dots" style="left:1885px;top:64.5px"><i style="left:0"></i><i style="left:5px"></i><i style="left:10px"></i></div><div class="crumbs" style="left:991px;top:88px;width:274px;height:27.25px"></div><span class="t" style="left:1010.50px;top:93.52px;font-size:16px;line-height:17.87px;color:#616161;transform:scaleX(0.9013);">BP_test</span><svg class="ico" style="left:1068px;top:94.5px" width="8" height="13" viewBox="0 0 8 13" fill="none" stroke="#616161" stroke-width="1.2" stroke-linecap="round" stroke-linejoin="round"><path d="M1 1l5.5 5.5L1 12"/></svg><span class="t" style="left:1082.00px;top:93.52px;font-size:16px;line-height:17.87px;color:#616161;transform:scaleX(0.9636);">recipes</span><svg class="ico" style="left:1139px;top:94.5px" width="8" height="13" viewBox="0 0 8 13" fill="none" stroke="#616161" stroke-width="1.2" stroke-linecap="round" stroke-linejoin="round"><path d="M1 1l5.5 5.5L1 12"/></svg><span class="t" style="left:1152.70px;top:93.52px;font-size:16px;line-height:17.87px;color:#616161;transform:scaleX(0.9807);">test</span><svg class="ico" style="left:1185px;top:94.5px" width="8" height="13" viewBox="0 0 8 13" fill="none" stroke="#616161" stroke-width="1.2" stroke-linecap="round" stroke-linejoin="round"><path d="M1 1l5.5 5.5L1 12"/></svg><span class="t" style="left:1199.00px;top:93.52px;font-size:16px;line-height:17.87px;color:#616161;transform:scaleX(0.9998);">crafting_t</span><div class="ed" style="left:991px;top:115.25px;width:912px;height:403px"><div class="cl" style="left:87px;top:380.00px;width:742px;height:23.75px"></div><div class="num" style="top:0.00px">1</div><div class="num" style="top:23.75px">2</div><div class="num" style="top:47.50px">3</div><div class="num" style="top:71.25px">4</div><div class="num" style="top:95.00px">5</div><div class="num" style="top:118.75px">6</div><div class="num" style="top:142.50px">7</div><div class="num" style="top:166.25px">8</div><div class="num" style="top:190.00px">9</div><div class="num" style="top:213.75px">10</div><div class="num" style="top:237.50px">11</div><div class="num" style="top:261.25px">12</div><div class="num" style="top:285.00px">13</div><div class="num" style="top:308.75px">14</div><div class="num" style="top:332.50px">15</div><div class="num" style="top:356.25px">16</div><div class="num act" style="top:380.00px">17</div><div class="guide" style="left:87.00px;top:23.75px;height:356.25px;background:#939393"></div><div class="guide" style="left:129.00px;top:71.25px;height:285.00px;background:#D3D3D3"></div><div class="guide" style="left:171.00px;top:95.00px;height:23.75px;background:#D3D3D3"></div><div class="guide" style="left:171.00px;top:190.00px;height:23.75px;background:#D3D3D3"></div><div class="guide" style="left:171.00px;top:261.25px;height:47.50px;background:#D3D3D3"></div><div class="code" style="left:87px;top:0"><div class="ln"><span class="br0">{</span></div><div class="ln">    <span class="key">&quot;format_version&quot;</span><span class="p">:</span> <span class="str">&quot;1.21.0&quot;</span><span class="p">,</span></div><div class="ln">    <span class="key">&quot;minecraft:recipe_shapeless&quot;</span><span class="p">:</span> <span class="br1">{</span></div><div class="ln">        <span class="key">&quot;description&quot;</span><span class="p">:</span> <span class="br2">{</span></div><div class="ln">            <span class="key">&quot;identifier&quot;</span><span class="p">:</span> <span class="str">&quot;test:dough&quot;</span></div><div class="ln">        <span class="br2">}</span><span class="p">,</span></div><div class="ln">        <span class="key">&quot;tags&quot;</span><span class="p">:</span> <span class="br2">[</span> <span class="str">&quot;crafting_table&quot;</span> <span class="br2">]</span><span class="p">,</span></div><div class="ln">        <span class="key">&quot;unlock&quot;</span><span class="p">:</span> <span class="br2">[</span></div><div class="ln">            <span class="br0">{</span> <span class="key">&quot;item&quot;</span><span class="p">:</span> <span class="str">&quot;test:flour&quot;</span> <span class="br0">}</span></div><div class="ln">        <span class="br2">]</span><span class="p">,</span></div><div class="ln">        <span class="key">&quot;ingredients&quot;</span><span class="p">:</span> <span class="br2">[</span></div><div class="ln">            <span class="br0">{</span> <span class="key">&quot;item&quot;</span><span class="p">:</span> <span class="str">&quot;test:flour&quot;</span> <span class="br0">}</span><span class="p">,</span></div><div class="ln">            <span class="br0">{</span> <span class="key">&quot;item&quot;</span><span class="p">:</span> <span class="str">&quot;minecraft:water_bucket&quot;</span> <span class="br0">}</span></div><div class="ln">        <span class="br2">]</span><span class="p">,</span></div><div class="ln">        <span class="key">&quot;result&quot;</span><span class="p">:</span> <span class="br2">{</span> <span class="key">&quot;item&quot;</span><span class="p">:</span> <span class="str">&quot;test:dough&quot;</span> <span class="br2">}</span></div><div class="ln">    <span class="br1">}</span></div><div class="ln"><span class="br0">}</span></div></div></div><svg class="ico" style="left:1829px;top:115px" width="60" height="34" shape-rendering="crispEdges"><rect x="0" y="0.2" width="0.9" height="1" fill="#444" opacity="0.4"/><rect x="4" y="2.2" width="0.9" height="1" fill="#2E6FC4" opacity="0.5"/><rect x="5" y="2.2" width="0.9" height="1" fill="#2E6FC4" opacity="0.5"/><rect x="6" y="2.2" width="0.9" height="1" fill="#2E6FC4" opacity="0.5"/><rect x="7" y="2.2" width="0.9" height="1" fill="#2E6FC4" opacity="0.5"/><rect x="8" y="2.2" width="0.9" height="1" fill="#2E6FC4" opacity="0.5"/><rect x="9" y="2.2" width="0.9" height="1" fill="#2E6FC4" opacity="0.5"/><rect x="10" y="2.2" width="0.9" height="1" fill="#2E6FC4" opacity="0.5"/><rect x="11" y="2.2" width="0.9" height="1" fill="#2E6FC4" opacity="0.5"/><rect x="12" y="2.2" width="0.9" height="1" fill="#2E6FC4" opacity="0.5"/><rect x="13" y="2.2" width="0.9" height="1" fill="#2E6FC4" opacity="0.5"/><rect x="14" y="2.2" width="0.9" height="1" fill="#2E6FC4" opacity="0.5"/><rect x="15" y="2.2" width="0.9" height="1" fill="#2E6FC4" opacity="0.5"/><rect x="16" y="2.2" width="0.9" height="1" fill="#2E6FC4" opacity="0.5"/><rect x="17" y="2.2" width="0.9" height="1" fill="#2E6FC4" opacity="0.5"/><rect x="18" y="2.2" width="0.9" height="1" fill="#2E6FC4" opacity="0.5"/><rect x="19" y="2.2" width="0.9" height="1" fill="#2E6FC4" opacity="0.5"/><rect x="20" y="2.2" width="0.9" height="1" fill="#666" opacity="0.4"/><rect x="22" y="2.2" width="0.9" height="1" fill="#B03030" opacity="0.5"/><rect x="23" y="2.2" width="0.9" height="1" fill="#B03030" opacity="0.5"/><rect x="24" y="2.2" width="0.9" height="1" fill="#B03030" opacity="0.5"/><rect x="25" y="2.2" width="0.9" height="1" fill="#B03030" opacity="0.5"/><rect x="26" y="2.2" width="0.9" height="1" fill="#B03030" opacity="0.5"/><rect x="27" y="2.2" width="0.9" height="1" fill="#B03030" opacity="0.5"/><rect x="28" y="2.2" width="0.9" height="1" fill="#B03030" opacity="0.5"/><rect x="29" y="2.2" width="0.9" height="1" fill="#B03030" opacity="0.5"/><rect x="30" y="2.2" width="0.9" height="1" fill="#666" opacity="0.4"/><rect x="4" y="4.2" width="0.9" height="1" fill="#2E6FC4" opacity="0.5"/><rect x="5" y="4.2" width="0.9" height="1" fill="#2E6FC4" opacity="0.5"/><rect x="6" y="4.2" width="0.9" height="1" fill="#2E6FC4" opacity="0.5"/><rect x="7" y="4.2" width="0.9" height="1" fill="#2E6FC4" opacity="0.5"/><rect x="8" y="4.2" width="0.9" height="1" fill="#2E6FC4" opacity="0.5"/><rect x="9" y="4.2" width="0.9" height="1" fill="#2E6FC4" opacity="0.5"/><rect x="10" y="4.2" width="0.9" height="1" fill="#2E6FC4" opacity="0.5"/><rect x="11" y="4.2" width="0.9" height="1" fill="#2E6FC4" opacity="0.5"/><rect x="12" y="4.2" width="0.9" height="1" fill="#2E6FC4" opacity="0.5"/><rect x="13" y="4.2" width="0.9" height="1" fill="#2E6FC4" opacity="0.5"/><rect x="14" y="4.2" width="0.9" height="1" fill="#2E6FC4" opacity="0.5"/><rect x="15" y="4.2" width="0.9" height="1" fill="#2E6FC4" opacity="0.5"/><rect x="16" y="4.2" width="0.9" height="1" fill="#2E6FC4" opacity="0.5"/><rect x="17" y="4.2" width="0.9" height="1" fill="#2E6FC4" opacity="0.5"/><rect x="18" y="4.2" width="0.9" height="1" fill="#2E6FC4" opacity="0.5"/><rect x="19" y="4.2" width="0.9" height="1" fill="#2E6FC4" opacity="0.5"/><rect x="20" y="4.2" width="0.9" height="1" fill="#2E6FC4" opacity="0.5"/><rect x="21" y="4.2" width="0.9" height="1" fill="#2E6FC4" opacity="0.5"/><rect x="22" y="4.2" width="0.9" height="1" fill="#2E6FC4" opacity="0.5"/><rect x="23" y="4.2" width="0.9" height="1" fill="#2E6FC4" opacity="0.5"/><rect x="24" y="4.2" width="0.9" height="1" fill="#2E6FC4" opacity="0.5"/><rect x="25" y="4.2" width="0.9" height="1" fill="#2E6FC4" opacity="0.5"/><rect x="26" y="4.2" width="0.9" height="1" fill="#2E6FC4" opacity="0.5"/><rect x="27" y="4.2" width="0.9" height="1" fill="#2E6FC4" opacity="0.5"/><rect x="28" y="4.2" width="0.9" height="1" fill="#2E6FC4" opacity="0.5"/><rect x="29" y="4.2" width="0.9" height="1" fill="#2E6FC4" opacity="0.5"/><rect x="30" y="4.2" width="0.9" height="1" fill="#2E6FC4" opacity="0.5"/><rect x="31" y="4.2" width="0.9" height="1" fill="#2E6FC4" opacity="0.5"/><rect x="32" y="4.2" width="0.9" height="1" fill="#666" opacity="0.4"/><rect x="34" y="4.2" width="0.9" height="1" fill="#444" opacity="0.4"/><rect x="8" y="6.2" width="0.9" height="1" fill="#2E6FC4" opacity="0.5"/><rect x="9" y="6.2" width="0.9" height="1" fill="#2E6FC4" opacity="0.5"/><rect x="10" y="6.2" width="0.9" height="1" fill="#2E6FC4" opacity="0.5"/><rect x="11" y="6.2" width="0.9" height="1" fill="#2E6FC4" opacity="0.5"/><rect x="12" y="6.2" width="0.9" height="1" fill="#2E6FC4" opacity="0.5"/><rect x="13" y="6.2" width="0.9" height="1" fill="#2E6FC4" opacity="0.5"/><rect x="14" y="6.2" width="0.9" height="1" fill="#2E6FC4" opacity="0.5"/><rect x="15" y="6.2" width="0.9" height="1" fill="#2E6FC4" opacity="0.5"/><rect x="16" y="6.2" width="0.9" height="1" fill="#2E6FC4" opacity="0.5"/><rect x="17" y="6.2" width="0.9" height="1" fill="#2E6FC4" opacity="0.5"/><rect x="18" y="6.2" width="0.9" height="1" fill="#2E6FC4" opacity="0.5"/><rect x="19" y="6.2" width="0.9" height="1" fill="#2E6FC4" opacity="0.5"/><rect x="20" y="6.2" width="0.9" height="1" fill="#2E6FC4" opacity="0.5"/><rect x="21" y="6.2" width="0.9" height="1" fill="#666" opacity="0.4"/><rect x="23" y="6.2" width="0.9" height="1" fill="#444" opacity="0.4"/><rect x="12" y="8.2" width="0.9" height="1" fill="#2E6FC4" opacity="0.5"/><rect x="13" y="8.2" width="0.9" height="1" fill="#2E6FC4" opacity="0.5"/><rect x="14" y="8.2" width="0.9" height="1" fill="#2E6FC4" opacity="0.5"/><rect x="15" y="8.2" width="0.9" height="1" fill="#2E6FC4" opacity="0.5"/><rect x="16" y="8.2" width="0.9" height="1" fill="#2E6FC4" opacity="0.5"/><rect x="17" y="8.2" width="0.9" height="1" fill="#2E6FC4" opacity="0.5"/><rect x="18" y="8.2" width="0.9" height="1" fill="#2E6FC4" opacity="0.5"/><rect x="19" y="8.2" width="0.9" height="1" fill="#2E6FC4" opacity="0.5"/><rect x="20" y="8.2" width="0.9" height="1" fill="#2E6FC4" opacity="0.5"/><rect x="21" y="8.2" width="0.9" height="1" fill="#2E6FC4" opacity="0.5"/><rect x="22" y="8.2" width="0.9" height="1" fill="#2E6FC4" opacity="0.5"/><rect x="23" y="8.2" width="0.9" height="1" fill="#2E6FC4" opacity="0.5"/><rect x="24" y="8.2" width="0.9" height="1" fill="#666" opacity="0.4"/><rect x="26" y="8.2" width="0.9" height="1" fill="#B03030" opacity="0.5"/><rect x="27" y="8.2" width="0.9" height="1" fill="#B03030" opacity="0.5"/><rect x="28" y="8.2" width="0.9" height="1" fill="#B03030" opacity="0.5"/><rect x="29" y="8.2" width="0.9" height="1" fill="#B03030" opacity="0.5"/><rect x="30" y="8.2" width="0.9" height="1" fill="#B03030" opacity="0.5"/><rect x="31" y="8.2" width="0.9" height="1" fill="#B03030" opacity="0.5"/><rect x="32" y="8.2" width="0.9" height="1" fill="#B03030" opacity="0.5"/><rect x="33" y="8.2" width="0.9" height="1" fill="#B03030" opacity="0.5"/><rect x="34" y="8.2" width="0.9" height="1" fill="#B03030" opacity="0.5"/><rect x="35" y="8.2" width="0.9" height="1" fill="#B03030" opacity="0.5"/><rect x="36" y="8.2" width="0.9" height="1" fill="#B03030" opacity="0.5"/><rect x="37" y="8.2" width="0.9" height="1" fill="#B03030" opacity="0.5"/><rect x="8" y="10.2" width="0.9" height="1" fill="#444" opacity="0.4"/><rect x="9" y="10.2" width="0.9" height="1" fill="#666" opacity="0.4"/><rect x="8" y="12.2" width="0.9" height="1" fill="#2E6FC4" opacity="0.5"/><rect x="9" y="12.2" width="0.9" height="1" fill="#2E6FC4" opacity="0.5"/><rect x="10" y="12.2" width="0.9" height="1" fill="#2E6FC4" opacity="0.5"/><rect x="11" y="12.2" width="0.9" height="1" fill="#2E6FC4" opacity="0.5"/><rect x="12" y="12.2" width="0.9" height="1" fill="#2E6FC4" opacity="0.5"/><rect x="13" y="12.2" width="0.9" height="1" fill="#2E6FC4" opacity="0.5"/><rect x="14" y="12.2" width="0.9" height="1" fill="#666" opacity="0.4"/><rect x="16" y="12.2" width="0.9" height="1" fill="#444" opacity="0.4"/><rect x="18" y="12.2" width="0.9" height="1" fill="#B03030" opacity="0.5"/><rect x="19" y="12.2" width="0.9" height="1" fill="#B03030" opacity="0.5"/><rect x="20" y="12.2" width="0.9" height="1" fill="#B03030" opacity="0.5"/><rect x="21" y="12.2" width="0.9" height="1" fill="#B03030" opacity="0.5"/><rect x="22" y="12.2" width="0.9" height="1" fill="#B03030" opacity="0.5"/><rect x="23" y="12.2" width="0.9" height="1" fill="#B03030" opacity="0.5"/><rect x="24" y="12.2" width="0.9" height="1" fill="#B03030" opacity="0.5"/><rect x="25" y="12.2" width="0.9" height="1" fill="#B03030" opacity="0.5"/><rect x="26" y="12.2" width="0.9" height="1" fill="#B03030" opacity="0.5"/><rect x="27" y="12.2" width="0.9" height="1" fill="#B03030" opacity="0.5"/><rect x="28" y="12.2" width="0.9" height="1" fill="#B03030" opacity="0.5"/><rect x="29" y="12.2" width="0.9" height="1" fill="#B03030" opacity="0.5"/><rect x="30" y="12.2" width="0.9" height="1" fill="#B03030" opacity="0.5"/><rect x="31" y="12.2" width="0.9" height="1" fill="#B03030" opacity="0.5"/><rect x="32" y="12.2" width="0.9" height="1" fill="#B03030" opacity="0.5"/><rect x="33" y="12.2" width="0.9" height="1" fill="#B03030" opacity="0.5"/><rect x="35" y="12.2" width="0.9" height="1" fill="#444" opacity="0.4"/><rect x="36" y="12.2" width="0.9" height="1" fill="#666" opacity="0.4"/><rect x="8" y="14.2" width="0.9" height="1" fill="#2E6FC4" opacity="0.5"/><rect x="9" y="14.2" width="0.9" height="1" fill="#2E6FC4" opacity="0.5"/><rect x="10" y="14.2" width="0.9" height="1" fill="#2E6FC4" opacity="0.5"/><rect x="11" y="14.2" width="0.9" height="1" fill="#2E6FC4" opacity="0.5"/><rect x="12" y="14.2" width="0.9" height="1" fill="#2E6FC4" opacity="0.5"/><rect x="13" y="14.2" width="0.9" height="1" fill="#2E6FC4" opacity="0.5"/><rect x="14" y="14.2" width="0.9" height="1" fill="#2E6FC4" opacity="0.5"/><rect x="15" y="14.2" width="0.9" height="1" fill="#2E6FC4" opacity="0.5"/><rect x="16" y="14.2" width="0.9" height="1" fill="#666" opacity="0.4"/><rect x="18" y="14.2" width="0.9" height="1" fill="#444" opacity="0.4"/><rect x="12" y="16.2" width="0.9" height="1" fill="#444" opacity="0.4"/><rect x="14" y="16.2" width="0.9" height="1" fill="#2E6FC4" opacity="0.5"/><rect x="15" y="16.2" width="0.9" height="1" fill="#2E6FC4" opacity="0.5"/><rect x="16" y="16.2" width="0.9" height="1" fill="#2E6FC4" opacity="0.5"/><rect x="17" y="16.2" width="0.9" height="1" fill="#2E6FC4" opacity="0.5"/><rect x="18" y="16.2" width="0.9" height="1" fill="#2E6FC4" opacity="0.5"/><rect x="19" y="16.2" width="0.9" height="1" fill="#2E6FC4" opacity="0.5"/><rect x="20" y="16.2" width="0.9" height="1" fill="#666" opacity="0.4"/><rect x="22" y="16.2" width="0.9" height="1" fill="#B03030" opacity="0.5"/><rect x="23" y="16.2" width="0.9" height="1" fill="#B03030" opacity="0.5"/><rect x="24" y="16.2" width="0.9" height="1" fill="#B03030" opacity="0.5"/><rect x="25" y="16.2" width="0.9" height="1" fill="#B03030" opacity="0.5"/><rect x="26" y="16.2" width="0.9" height="1" fill="#B03030" opacity="0.5"/><rect x="27" y="16.2" width="0.9" height="1" fill="#B03030" opacity="0.5"/><rect x="28" y="16.2" width="0.9" height="1" fill="#B03030" opacity="0.5"/><rect x="29" y="16.2" width="0.9" height="1" fill="#B03030" opacity="0.5"/><rect x="30" y="16.2" width="0.9" height="1" fill="#B03030" opacity="0.5"/><rect x="31" y="16.2" width="0.9" height="1" fill="#B03030" opacity="0.5"/><rect x="32" y="16.2" width="0.9" height="1" fill="#B03030" opacity="0.5"/><rect x="33" y="16.2" width="0.9" height="1" fill="#B03030" opacity="0.5"/><rect x="35" y="16.2" width="0.9" height="1" fill="#444" opacity="0.4"/><rect x="8" y="18.2" width="0.9" height="1" fill="#444" opacity="0.4"/><rect x="9" y="18.2" width="0.9" height="1" fill="#666" opacity="0.4"/><rect x="8" y="20.2" width="0.9" height="1" fill="#2E6FC4" opacity="0.5"/><rect x="9" y="20.2" width="0.9" height="1" fill="#2E6FC4" opacity="0.5"/><rect x="10" y="20.2" width="0.9" height="1" fill="#2E6FC4" opacity="0.5"/><rect x="11" y="20.2" width="0.9" height="1" fill="#2E6FC4" opacity="0.5"/><rect x="12" y="20.2" width="0.9" height="1" fill="#2E6FC4" opacity="0.5"/><rect x="13" y="20.2" width="0.9" height="1" fill="#2E6FC4" opacity="0.5"/><rect x="14" y="20.2" width="0.9" height="1" fill="#2E6FC4" opacity="0.5"/><rect x="15" y="20.2" width="0.9" height="1" fill="#2E6FC4" opacity="0.5"/><rect x="16" y="20.2" width="0.9" height="1" fill="#2E6FC4" opacity="0.5"/><rect x="17" y="20.2" width="0.9" height="1" fill="#2E6FC4" opacity="0.5"/><rect x="18" y="20.2" width="0.9" height="1" fill="#2E6FC4" opacity="0.5"/><rect x="19" y="20.2" width="0.9" height="1" fill="#2E6FC4" opacity="0.5"/><rect x="20" y="20.2" width="0.9" height="1" fill="#2E6FC4" opacity="0.5"/><rect x="21" y="20.2" width="0.9" height="1" fill="#666" opacity="0.4"/><rect x="23" y="20.2" width="0.9" height="1" fill="#444" opacity="0.4"/><rect x="12" y="22.2" width="0.9" height="1" fill="#444" opacity="0.4"/><rect x="14" y="22.2" width="0.9" height="1" fill="#2E6FC4" opacity="0.5"/><rect x="15" y="22.2" width="0.9" height="1" fill="#2E6FC4" opacity="0.5"/><rect x="16" y="22.2" width="0.9" height="1" fill="#2E6FC4" opacity="0.5"/><rect x="17" y="22.2" width="0.9" height="1" fill="#2E6FC4" opacity="0.5"/><rect x="18" y="22.2" width="0.9" height="1" fill="#2E6FC4" opacity="0.5"/><rect x="19" y="22.2" width="0.9" height="1" fill="#2E6FC4" opacity="0.5"/><rect x="20" y="22.2" width="0.9" height="1" fill="#666" opacity="0.4"/><rect x="22" y="22.2" width="0.9" height="1" fill="#B03030" opacity="0.5"/><rect x="23" y="22.2" width="0.9" height="1" fill="#B03030" opacity="0.5"/><rect x="24" y="22.2" width="0.9" height="1" fill="#B03030" opacity="0.5"/><rect x="25" y="22.2" width="0.9" height="1" fill="#B03030" opacity="0.5"/><rect x="26" y="22.2" width="0.9" height="1" fill="#B03030" opacity="0.5"/><rect x="27" y="22.2" width="0.9" height="1" fill="#B03030" opacity="0.5"/><rect x="28" y="22.2" width="0.9" height="1" fill="#B03030" opacity="0.5"/><rect x="29" y="22.2" width="0.9" height="1" fill="#B03030" opacity="0.5"/><rect x="30" y="22.2" width="0.9" height="1" fill="#B03030" opacity="0.5"/><rect x="31" y="22.2" width="0.9" height="1" fill="#B03030" opacity="0.5"/><rect x="32" y="22.2" width="0.9" height="1" fill="#B03030" opacity="0.5"/><rect x="33" y="22.2" width="0.9" height="1" fill="#B03030" opacity="0.5"/><rect x="35" y="22.2" width="0.9" height="1" fill="#444" opacity="0.4"/><rect x="36" y="22.2" width="0.9" height="1" fill="#666" opacity="0.4"/><rect x="12" y="24.2" width="0.9" height="1" fill="#444" opacity="0.4"/><rect x="14" y="24.2" width="0.9" height="1" fill="#2E6FC4" opacity="0.5"/><rect x="15" y="24.2" width="0.9" height="1" fill="#2E6FC4" opacity="0.5"/><rect x="16" y="24.2" width="0.9" height="1" fill="#2E6FC4" opacity="0.5"/><rect x="17" y="24.2" width="0.9" height="1" fill="#2E6FC4" opacity="0.5"/><rect x="18" y="24.2" width="0.9" height="1" fill="#2E6FC4" opacity="0.5"/><rect x="19" y="24.2" width="0.9" height="1" fill="#2E6FC4" opacity="0.5"/><rect x="20" y="24.2" width="0.9" height="1" fill="#666" opacity="0.4"/><rect x="22" y="24.2" width="0.9" height="1" fill="#B03030" opacity="0.5"/><rect x="23" y="24.2" width="0.9" height="1" fill="#B03030" opacity="0.5"/><rect x="24" y="24.2" width="0.9" height="1" fill="#B03030" opacity="0.5"/><rect x="25" y="24.2" width="0.9" height="1" fill="#B03030" opacity="0.5"/><rect x="26" y="24.2" width="0.9" height="1" fill="#B03030" opacity="0.5"/><rect x="27" y="24.2" width="0.9" height="1" fill="#B03030" opacity="0.5"/><rect x="28" y="24.2" width="0.9" height="1" fill="#B03030" opacity="0.5"/><rect x="29" y="24.2" width="0.9" height="1" fill="#B03030" opacity="0.5"/><rect x="30" y="24.2" width="0.9" height="1" fill="#B03030" opacity="0.5"/><rect x="31" y="24.2" width="0.9" height="1" fill="#B03030" opacity="0.5"/><rect x="32" y="24.2" width="0.9" height="1" fill="#B03030" opacity="0.5"/><rect x="33" y="24.2" width="0.9" height="1" fill="#B03030" opacity="0.5"/><rect x="34" y="24.2" width="0.9" height="1" fill="#B03030" opacity="0.5"/><rect x="35" y="24.2" width="0.9" height="1" fill="#B03030" opacity="0.5"/><rect x="36" y="24.2" width="0.9" height="1" fill="#B03030" opacity="0.5"/><rect x="37" y="24.2" width="0.9" height="1" fill="#B03030" opacity="0.5"/><rect x="38" y="24.2" width="0.9" height="1" fill="#B03030" opacity="0.5"/><rect x="39" y="24.2" width="0.9" height="1" fill="#B03030" opacity="0.5"/><rect x="40" y="24.2" width="0.9" height="1" fill="#B03030" opacity="0.5"/><rect x="41" y="24.2" width="0.9" height="1" fill="#B03030" opacity="0.5"/><rect x="42" y="24.2" width="0.9" height="1" fill="#B03030" opacity="0.5"/><rect x="43" y="24.2" width="0.9" height="1" fill="#B03030" opacity="0.5"/><rect x="44" y="24.2" width="0.9" height="1" fill="#B03030" opacity="0.5"/><rect x="45" y="24.2" width="0.9" height="1" fill="#B03030" opacity="0.5"/><rect x="47" y="24.2" width="0.9" height="1" fill="#444" opacity="0.4"/><rect x="8" y="26.2" width="0.9" height="1" fill="#444" opacity="0.4"/><rect x="9" y="26.2" width="0.9" height="1" fill="#666" opacity="0.4"/><rect x="8" y="28.2" width="0.9" height="1" fill="#2E6FC4" opacity="0.5"/><rect x="9" y="28.2" width="0.9" height="1" fill="#2E6FC4" opacity="0.5"/><rect x="10" y="28.2" width="0.9" height="1" fill="#2E6FC4" opacity="0.5"/><rect x="11" y="28.2" width="0.9" height="1" fill="#2E6FC4" opacity="0.5"/><rect x="12" y="28.2" width="0.9" height="1" fill="#2E6FC4" opacity="0.5"/><rect x="13" y="28.2" width="0.9" height="1" fill="#2E6FC4" opacity="0.5"/><rect x="14" y="28.2" width="0.9" height="1" fill="#2E6FC4" opacity="0.5"/><rect x="15" y="28.2" width="0.9" height="1" fill="#2E6FC4" opacity="0.5"/><rect x="16" y="28.2" width="0.9" height="1" fill="#666" opacity="0.4"/><rect x="18" y="28.2" width="0.9" height="1" fill="#444" opacity="0.4"/><rect x="20" y="28.2" width="0.9" height="1" fill="#2E6FC4" opacity="0.5"/><rect x="21" y="28.2" width="0.9" height="1" fill="#2E6FC4" opacity="0.5"/><rect x="22" y="28.2" width="0.9" height="1" fill="#2E6FC4" opacity="0.5"/><rect x="23" y="28.2" width="0.9" height="1" fill="#2E6FC4" opacity="0.5"/><rect x="24" y="28.2" width="0.9" height="1" fill="#2E6FC4" opacity="0.5"/><rect x="25" y="28.2" width="0.9" height="1" fill="#2E6FC4" opacity="0.5"/><rect x="26" y="28.2" width="0.9" height="1" fill="#666" opacity="0.4"/><rect x="28" y="28.2" width="0.9" height="1" fill="#B03030" opacity="0.5"/><rect x="29" y="28.2" width="0.9" height="1" fill="#B03030" opacity="0.5"/><rect x="30" y="28.2" width="0.9" height="1" fill="#B03030" opacity="0.5"/><rect x="31" y="28.2" width="0.9" height="1" fill="#B03030" opacity="0.5"/><rect x="32" y="28.2" width="0.9" height="1" fill="#B03030" opacity="0.5"/><rect x="33" y="28.2" width="0.9" height="1" fill="#B03030" opacity="0.5"/><rect x="34" y="28.2" width="0.9" height="1" fill="#B03030" opacity="0.5"/><rect x="35" y="28.2" width="0.9" height="1" fill="#B03030" opacity="0.5"/><rect x="36" y="28.2" width="0.9" height="1" fill="#B03030" opacity="0.5"/><rect x="37" y="28.2" width="0.9" height="1" fill="#B03030" opacity="0.5"/><rect x="38" y="28.2" width="0.9" height="1" fill="#B03030" opacity="0.5"/><rect x="39" y="28.2" width="0.9" height="1" fill="#B03030" opacity="0.5"/><rect x="41" y="28.2" width="0.9" height="1" fill="#444" opacity="0.4"/><rect x="4" y="30.2" width="0.9" height="1" fill="#444" opacity="0.4"/><rect x="0" y="32.2" width="0.9" height="1" fill="#444" opacity="0.4"/></svg><div class="abs" style="left:1903px;top:115px;width:1px;height:403px;background:#F0F0F0"></div><div class="abs" style="left:1904px;top:115px;width:16px;height:403px;background:#FFFFFF"></div><div class="abs" style="left:1904px;top:309px;width:16px;height:2.5px;background:#4A4A4A"></div><div class="abs" style="left:60px;top:518px;width:1860px;height:1px;background:#E5E5E5"></div><div class="tabs" style="left:60px;top:519px;width:1860px;height:42px"></div><div class="tab" style="left:60px;top:518px;width:293px;height:43px;border-top:1px solid #005FB8;border-bottom:1px solid #F3F3F3"></div><svg class="ico" style="left:77px;top:533px" width="14" height="14" viewBox="0 0 14 14" fill="none" stroke="#C2B62A" stroke-width="1.6" stroke-linecap="round" stroke-linejoin="round"><path d="M4.2 1.2c-1.3 0-1.9.6-1.9 1.9v2.2c0 .9-.4 1.5-1.3 1.7.9.2 1.3.8 1.3 1.7v2.2c0 1.3.6 1.9 1.9 1.9M9.8 1.2c1.3 0 1.9.6 1.9 1.9v2.2c0 .9.4 1.5 1.3 1.7-.9.2-1.3.8-1.3 1.7v2.2c0 1.3-.6 1.9-1.9 1.9"/></svg><span class="t" style="left:100.20px;top:531.29px;font-size:16.25px;line-height:18.15px;color:#474747;transform:scaleX(0.9790);">bread_from_dough.recipe.json</span><svg class="ico" style="left:328.5px;top:532.5px" width="11.5" height="11.5" viewBox="0 0 11.5 11.5" fill="none" stroke="#1F1F1F" stroke-width="1.3" stroke-linecap="round" stroke-linejoin="round"><path d="M.8 .8l9.9 9.9M10.7 .8l-9.9 9.9"/></svg><svg class="ico" style="left:1849px;top:529px" width="20" height="20" viewBox="0 0 20 20" fill="none" stroke="#3B3B3B" stroke-width="1.4" stroke-linecap="round" stroke-linejoin="round"><rect x="2" y="2" width="16" height="16" rx="2"/><path d="M10 2v16"/></svg><div class="dots" style="left:1885px;top:537.5px"><i style="left:0"></i><i style="left:5px"></i><i style="left:10px"></i></div><div class="crumbs" style="left:60px;top:561px;width:1860px;height:28px"></div><span class="t" style="left:80.60px;top:566.52px;font-size:16px;line-height:17.87px;color:#616161;transform:scaleX(0.8995);">BP_test</span><svg class="ico" style="left:138px;top:567.5px" width="8" height="13" viewBox="0 0 8 13" fill="none" stroke="#616161" stroke-width="1.2" stroke-linecap="round" stroke-linejoin="round"><path d="M1 1l5.5 5.5L1 12"/></svg><span class="t" style="left:151.70px;top:566.52px;font-size:16px;line-height:17.87px;color:#616161;transform:scaleX(0.9675);">recipes</span><svg class="ico" style="left:209px;top:567.5px" width="8" height="13" viewBox="0 0 8 13" fill="none" stroke="#616161" stroke-width="1.2" stroke-linecap="round" stroke-linejoin="round"><path d="M1 1l5.5 5.5L1 12"/></svg><span class="t" style="left:222.00px;top:566.52px;font-size:16px;line-height:17.87px;color:#616161;transform:scaleX(1.0079);">test</span><svg class="ico" style="left:256px;top:567.5px" width="8" height="13" viewBox="0 0 8 13" fill="none" stroke="#616161" stroke-width="1.2" stroke-linecap="round" stroke-linejoin="round"><path d="M1 1l5.5 5.5L1 12"/></svg><span class="t" style="left:268.60px;top:566.52px;font-size:16px;line-height:17.87px;color:#616161;transform:scaleX(0.9855);">furnace</span><svg class="ico" style="left:329px;top:567.5px" width="8" height="13" viewBox="0 0 8 13" fill="none" stroke="#616161" stroke-width="1.2" stroke-linecap="round" stroke-linejoin="round"><path d="M1 1l5.5 5.5L1 12"/></svg><svg class="ico" style="left:347px;top:566px" width="14" height="14" viewBox="0 0 14 14" fill="none" stroke="#C2B62A" stroke-width="1.6" stroke-linecap="round" stroke-linejoin="round"><path d="M4.2 1.2c-1.3 0-1.9.6-1.9 1.9v2.2c0 .9-.4 1.5-1.3 1.7.9.2 1.3.8 1.3 1.7v2.2c0 1.3.6 1.9 1.9 1.9M9.8 1.2c1.3 0 1.9.6 1.9 1.9v2.2c0 .9.4 1.5 1.3 1.7-.9.2-1.3.8-1.3 1.7v2.2c0 1.3-.6 1.9-1.9 1.9"/></svg><span class="t" style="left:370.00px;top:566.52px;font-size:16px;line-height:17.87px;color:#616161;transform:scaleX(0.9929);">bread_from_dough.recipe.json</span><svg class="ico" style="left:592px;top:567.5px" width="8" height="13" viewBox="0 0 8 13" fill="none" stroke="#616161" stroke-width="1.2" stroke-linecap="round" stroke-linejoin="round"><path d="M1 1l5.5 5.5L1 12"/></svg><span class="t" style="left:606.00px;top:566.52px;font-size:16px;line-height:17.87px;color:#616161;transform:scaleX(0.8618);">...</span><div class="ed" style="left:60px;top:589px;width:1843px;height:403px"><div class="cl" style="left:88px;top:308.75px;width:1634px;height:23.75px"></div><div class="num" style="top:0.00px">1</div><div class="num" style="top:23.75px">2</div><div class="num" style="top:47.50px">3</div><div class="num" style="top:71.25px">4</div><div class="num" style="top:95.00px">5</div><div class="num" style="top:118.75px">6</div><div class="num" style="top:142.50px">7</div><div class="num" style="top:166.25px">8</div><div class="num" style="top:190.00px">9</div><div class="num" style="top:213.75px">10</div><div class="num" style="top:237.50px">11</div><div class="num" style="top:261.25px">12</div><div class="num" style="top:285.00px">13</div><div class="num act" style="top:308.75px">14</div><div class="guide" style="left:88.00px;top:23.75px;height:285.00px;background:#939393"></div><div class="guide" style="left:130.00px;top:71.25px;height:213.75px;background:#D3D3D3"></div><div class="guide" style="left:172.00px;top:95.00px;height:23.75px;background:#D3D3D3"></div><div class="guide" style="left:172.00px;top:190.00px;height:23.75px;background:#D3D3D3"></div><div class="code" style="left:88px;top:0"><div class="ln"><span class="br0 bm">{</span></div><div class="ln">    <span class="key">&quot;format_version&quot;</span><span class="p">:</span> <span class="str">&quot;1.21.0&quot;</span><span class="p">,</span></div><div class="ln">    <span class="key">&quot;minecraft:recipe_furnace&quot;</span><span class="p">:</span> <span class="br1">{</span></div><div class="ln">        <span class="key">&quot;description&quot;</span><span class="p">:</span> <span class="br2">{</span></div><div class="ln">            <span class="key">&quot;identifier&quot;</span><span class="p">:</span> <span class="str">&quot;test:bread_from_dough&quot;</span></div><div class="ln">        <span class="br2">}</span><span class="p">,</span></div><div class="ln">        <span class="key">&quot;tags&quot;</span><span class="p">:</span> <span class="br2">[</span> <span class="str">&quot;furnace&quot;</span> <span class="br2">]</span><span class="p">,</span></div><div class="ln">        <span class="key">&quot;unlock&quot;</span><span class="p">:</span> <span class="br2">[</span></div><div class="ln">            <span class="br0">{</span> <span class="key">&quot;item&quot;</span><span class="p">:</span> <span class="str">&quot;test:dough&quot;</span> <span class="br0">}</span></div><div class="ln">        <span class="br2">]</span><span class="p">,</span></div><div class="ln">        <span class="key">&quot;input&quot;</span><span class="p">:</span> <span class="str">&quot;test:dough&quot;</span><span class="p">,</span></div><div class="ln">        <span class="key">&quot;output&quot;</span><span class="p">:</span> <span class="str">&quot;minecraft:bread&quot;</span></div><div class="ln">    <span class="br1">}</span></div><div class="ln"><span class="br0 bm">}</span></div></div></div><svg class="ico" style="left:1791px;top:589px" width="60" height="28" shape-rendering="crispEdges"><rect x="0" y="0.2" width="0.9" height="1" fill="#444" opacity="0.4"/><rect x="4" y="2.2" width="0.9" height="1" fill="#2E6FC4" opacity="0.5"/><rect x="5" y="2.2" width="0.9" height="1" fill="#2E6FC4" opacity="0.5"/><rect x="6" y="2.2" width="0.9" height="1" fill="#2E6FC4" opacity="0.5"/><rect x="7" y="2.2" width="0.9" height="1" fill="#2E6FC4" opacity="0.5"/><rect x="8" y="2.2" width="0.9" height="1" fill="#2E6FC4" opacity="0.5"/><rect x="9" y="2.2" width="0.9" height="1" fill="#2E6FC4" opacity="0.5"/><rect x="10" y="2.2" width="0.9" height="1" fill="#2E6FC4" opacity="0.5"/><rect x="11" y="2.2" width="0.9" height="1" fill="#2E6FC4" opacity="0.5"/><rect x="12" y="2.2" width="0.9" height="1" fill="#2E6FC4" opacity="0.5"/><rect x="13" y="2.2" width="0.9" height="1" fill="#2E6FC4" opacity="0.5"/><rect x="14" y="2.2" width="0.9" height="1" fill="#2E6FC4" opacity="0.5"/><rect x="15" y="2.2" width="0.9" height="1" fill="#2E6FC4" opacity="0.5"/><rect x="16" y="2.2" width="0.9" height="1" fill="#2E6FC4" opacity="0.5"/><rect x="17" y="2.2" width="0.9" height="1" fill="#2E6FC4" opacity="0.5"/><rect x="18" y="2.2" width="0.9" height="1" fill="#2E6FC4" opacity="0.5"/><rect x="19" y="2.2" width="0.9" height="1" fill="#2E6FC4" opacity="0.5"/><rect x="20" y="2.2" width="0.9" height="1" fill="#666" opacity="0.4"/><rect x="22" y="2.2" width="0.9" height="1" fill="#B03030" opacity="0.5"/><rect x="23" y="2.2" width="0.9" height="1" fill="#B03030" opacity="0.5"/><rect x="24" y="2.2" width="0.9" height="1" fill="#B03030" opacity="0.5"/><rect x="25" y="2.2" width="0.9" height="1" fill="#B03030" opacity="0.5"/><rect x="26" y="2.2" width="0.9" height="1" fill="#B03030" opacity="0.5"/><rect x="27" y="2.2" width="0.9" height="1" fill="#B03030" opacity="0.5"/><rect x="28" y="2.2" width="0.9" height="1" fill="#B03030" opacity="0.5"/><rect x="29" y="2.2" width="0.9" height="1" fill="#B03030" opacity="0.5"/><rect x="30" y="2.2" width="0.9" height="1" fill="#666" opacity="0.4"/><rect x="4" y="4.2" width="0.9" height="1" fill="#2E6FC4" opacity="0.5"/><rect x="5" y="4.2" width="0.9" height="1" fill="#2E6FC4" opacity="0.5"/><rect x="6" y="4.2" width="0.9" height="1" fill="#2E6FC4" opacity="0.5"/><rect x="7" y="4.2" width="0.9" height="1" fill="#2E6FC4" opacity="0.5"/><rect x="8" y="4.2" width="0.9" height="1" fill="#2E6FC4" opacity="0.5"/><rect x="9" y="4.2" width="0.9" height="1" fill="#2E6FC4" opacity="0.5"/><rect x="10" y="4.2" width="0.9" height="1" fill="#2E6FC4" opacity="0.5"/><rect x="11" y="4.2" width="0.9" height="1" fill="#2E6FC4" opacity="0.5"/><rect x="12" y="4.2" width="0.9" height="1" fill="#2E6FC4" opacity="0.5"/><rect x="13" y="4.2" width="0.9" height="1" fill="#2E6FC4" opacity="0.5"/><rect x="14" y="4.2" width="0.9" height="1" fill="#2E6FC4" opacity="0.5"/><rect x="15" y="4.2" width="0.9" height="1" fill="#2E6FC4" opacity="0.5"/><rect x="16" y="4.2" width="0.9" height="1" fill="#2E6FC4" opacity="0.5"/><rect x="17" y="4.2" width="0.9" height="1" fill="#2E6FC4" opacity="0.5"/><rect x="18" y="4.2" width="0.9" height="1" fill="#2E6FC4" opacity="0.5"/><rect x="19" y="4.2" width="0.9" height="1" fill="#2E6FC4" opacity="0.5"/><rect x="20" y="4.2" width="0.9" height="1" fill="#2E6FC4" opacity="0.5"/><rect x="21" y="4.2" width="0.9" height="1" fill="#2E6FC4" opacity="0.5"/><rect x="22" y="4.2" width="0.9" height="1" fill="#2E6FC4" opacity="0.5"/><rect x="23" y="4.2" width="0.9" height="1" fill="#2E6FC4" opacity="0.5"/><rect x="24" y="4.2" width="0.9" height="1" fill="#2E6FC4" opacity="0.5"/><rect x="25" y="4.2" width="0.9" height="1" fill="#2E6FC4" opacity="0.5"/><rect x="26" y="4.2" width="0.9" height="1" fill="#2E6FC4" opacity="0.5"/><rect x="27" y="4.2" width="0.9" height="1" fill="#2E6FC4" opacity="0.5"/><rect x="28" y="4.2" width="0.9" height="1" fill="#2E6FC4" opacity="0.5"/><rect x="29" y="4.2" width="0.9" height="1" fill="#2E6FC4" opacity="0.5"/><rect x="30" y="4.2" width="0.9" height="1" fill="#666" opacity="0.4"/><rect x="32" y="4.2" width="0.9" height="1" fill="#444" opacity="0.4"/><rect x="8" y="6.2" width="0.9" height="1" fill="#2E6FC4" opacity="0.5"/><rect x="9" y="6.2" width="0.9" height="1" fill="#2E6FC4" opacity="0.5"/><rect x="10" y="6.2" width="0.9" height="1" fill="#2E6FC4" opacity="0.5"/><rect x="11" y="6.2" width="0.9" height="1" fill="#2E6FC4" opacity="0.5"/><rect x="12" y="6.2" width="0.9" height="1" fill="#2E6FC4" opacity="0.5"/><rect x="13" y="6.2" width="0.9" height="1" fill="#2E6FC4" opacity="0.5"/><rect x="14" y="6.2" width="0.9" height="1" fill="#2E6FC4" opacity="0.5"/><rect x="15" y="6.2" width="0.9" height="1" fill="#2E6FC4" opacity="0.5"/><rect x="16" y="6.2" width="0.9" height="1" fill="#2E6FC4" opacity="0.5"/><rect x="17" y="6.2" width="0.9" height="1" fill="#2E6FC4" opacity="0.5"/><rect x="18" y="6.2" width="0.9" height="1" fill="#2E6FC4" opacity="0.5"/><rect x="19" y="6.2" width="0.9" height="1" fill="#2E6FC4" opacity="0.5"/><rect x="20" y="6.2" width="0.9" height="1" fill="#2E6FC4" opacity="0.5"/><rect x="21" y="6.2" width="0.9" height="1" fill="#666" opacity="0.4"/><rect x="23" y="6.2" width="0.9" height="1" fill="#444" opacity="0.4"/><rect x="12" y="8.2" width="0.9" height="1" fill="#2E6FC4" opacity="0.5"/><rect x="13" y="8.2" width="0.9" height="1" fill="#2E6FC4" opacity="0.5"/><rect x="14" y="8.2" width="0.9" height="1" fill="#2E6FC4" opacity="0.5"/><rect x="15" y="8.2" width="0.9" height="1" fill="#2E6FC4" opacity="0.5"/><rect x="16" y="8.2" width="0.9" height="1" fill="#2E6FC4" opacity="0.5"/><rect x="17" y="8.2" width="0.9" height="1" fill="#2E6FC4" opacity="0.5"/><rect x="18" y="8.2" width="0.9" height="1" fill="#2E6FC4" opacity="0.5"/><rect x="19" y="8.2" width="0.9" height="1" fill="#2E6FC4" opacity="0.5"/><rect x="20" y="8.2" width="0.9" height="1" fill="#2E6FC4" opacity="0.5"/><rect x="21" y="8.2" width="0.9" height="1" fill="#2E6FC4" opacity="0.5"/><rect x="22" y="8.2" width="0.9" height="1" fill="#2E6FC4" opacity="0.5"/><rect x="23" y="8.2" width="0.9" height="1" fill="#2E6FC4" opacity="0.5"/><rect x="24" y="8.2" width="0.9" height="1" fill="#666" opacity="0.4"/><rect x="26" y="8.2" width="0.9" height="1" fill="#B03030" opacity="0.5"/><rect x="27" y="8.2" width="0.9" height="1" fill="#B03030" opacity="0.5"/><rect x="28" y="8.2" width="0.9" height="1" fill="#B03030" opacity="0.5"/><rect x="29" y="8.2" width="0.9" height="1" fill="#B03030" opacity="0.5"/><rect x="30" y="8.2" width="0.9" height="1" fill="#B03030" opacity="0.5"/><rect x="31" y="8.2" width="0.9" height="1" fill="#B03030" opacity="0.5"/><rect x="32" y="8.2" width="0.9" height="1" fill="#B03030" opacity="0.5"/><rect x="33" y="8.2" width="0.9" height="1" fill="#B03030" opacity="0.5"/><rect x="34" y="8.2" width="0.9" height="1" fill="#B03030" opacity="0.5"/><rect x="35" y="8.2" width="0.9" height="1" fill="#B03030" opacity="0.5"/><rect x="36" y="8.2" width="0.9" height="1" fill="#B03030" opacity="0.5"/><rect x="37" y="8.2" width="0.9" height="1" fill="#B03030" opacity="0.5"/><rect x="38" y="8.2" width="0.9" height="1" fill="#B03030" opacity="0.5"/><rect x="39" y="8.2" width="0.9" height="1" fill="#B03030" opacity="0.5"/><rect x="40" y="8.2" width="0.9" height="1" fill="#B03030" opacity="0.5"/><rect x="41" y="8.2" width="0.9" height="1" fill="#B03030" opacity="0.5"/><rect x="42" y="8.2" width="0.9" height="1" fill="#B03030" opacity="0.5"/><rect x="43" y="8.2" width="0.9" height="1" fill="#B03030" opacity="0.5"/><rect x="44" y="8.2" width="0.9" height="1" fill="#B03030" opacity="0.5"/><rect x="45" y="8.2" width="0.9" height="1" fill="#B03030" opacity="0.5"/><rect x="46" y="8.2" width="0.9" height="1" fill="#B03030" opacity="0.5"/><rect x="47" y="8.2" width="0.9" height="1" fill="#B03030" opacity="0.5"/><rect x="48" y="8.2" width="0.9" height="1" fill="#B03030" opacity="0.5"/><rect x="8" y="10.2" width="0.9" height="1" fill="#444" opacity="0.4"/><rect x="9" y="10.2" width="0.9" height="1" fill="#666" opacity="0.4"/><rect x="8" y="12.2" width="0.9" height="1" fill="#2E6FC4" opacity="0.5"/><rect x="9" y="12.2" width="0.9" height="1" fill="#2E6FC4" opacity="0.5"/><rect x="10" y="12.2" width="0.9" height="1" fill="#2E6FC4" opacity="0.5"/><rect x="11" y="12.2" width="0.9" height="1" fill="#2E6FC4" opacity="0.5"/><rect x="12" y="12.2" width="0.9" height="1" fill="#2E6FC4" opacity="0.5"/><rect x="13" y="12.2" width="0.9" height="1" fill="#2E6FC4" opacity="0.5"/><rect x="14" y="12.2" width="0.9" height="1" fill="#666" opacity="0.4"/><rect x="16" y="12.2" width="0.9" height="1" fill="#444" opacity="0.4"/><rect x="18" y="12.2" width="0.9" height="1" fill="#B03030" opacity="0.5"/><rect x="19" y="12.2" width="0.9" height="1" fill="#B03030" opacity="0.5"/><rect x="20" y="12.2" width="0.9" height="1" fill="#B03030" opacity="0.5"/><rect x="21" y="12.2" width="0.9" height="1" fill="#B03030" opacity="0.5"/><rect x="22" y="12.2" width="0.9" height="1" fill="#B03030" opacity="0.5"/><rect x="23" y="12.2" width="0.9" height="1" fill="#B03030" opacity="0.5"/><rect x="24" y="12.2" width="0.9" height="1" fill="#B03030" opacity="0.5"/><rect x="25" y="12.2" width="0.9" height="1" fill="#B03030" opacity="0.5"/><rect x="26" y="12.2" width="0.9" height="1" fill="#B03030" opacity="0.5"/><rect x="28" y="12.2" width="0.9" height="1" fill="#444" opacity="0.4"/><rect x="29" y="12.2" width="0.9" height="1" fill="#666" opacity="0.4"/><rect x="8" y="14.2" width="0.9" height="1" fill="#2E6FC4" opacity="0.5"/><rect x="9" y="14.2" width="0.9" height="1" fill="#2E6FC4" opacity="0.5"/><rect x="10" y="14.2" width="0.9" height="1" fill="#2E6FC4" opacity="0.5"/><rect x="11" y="14.2" width="0.9" height="1" fill="#2E6FC4" opacity="0.5"/><rect x="12" y="14.2" width="0.9" height="1" fill="#2E6FC4" opacity="0.5"/><rect x="13" y="14.2" width="0.9" height="1" fill="#2E6FC4" opacity="0.5"/><rect x="14" y="14.2" width="0.9" height="1" fill="#2E6FC4" opacity="0.5"/><rect x="15" y="14.2" width="0.9" height="1" fill="#2E6FC4" opacity="0.5"/><rect x="16" y="14.2" width="0.9" height="1" fill="#666" opacity="0.4"/><rect x="18" y="14.2" width="0.9" height="1" fill="#444" opacity="0.4"/><rect x="12" y="16.2" width="0.9" height="1" fill="#444" opacity="0.4"/><rect x="14" y="16.2" width="0.9" height="1" fill="#2E6FC4" opacity="0.5"/><rect x="15" y="16.2" width="0.9" height="1" fill="#2E6FC4" opacity="0.5"/><rect x="16" y="16.2" width="0.9" height="1" fill="#2E6FC4" opacity="0.5"/><rect x="17" y="16.2" width="0.9" height="1" fill="#2E6FC4" opacity="0.5"/><rect x="18" y="16.2" width="0.9" height="1" fill="#2E6FC4" opacity="0.5"/><rect x="19" y="16.2" width="0.9" height="1" fill="#2E6FC4" opacity="0.5"/><rect x="20" y="16.2" width="0.9" height="1" fill="#666" opacity="0.4"/><rect x="22" y="16.2" width="0.9" height="1" fill="#B03030" opacity="0.5"/><rect x="23" y="16.2" width="0.9" height="1" fill="#B03030" opacity="0.5"/><rect x="24" y="16.2" width="0.9" height="1" fill="#B03030" opacity="0.5"/><rect x="25" y="16.2" width="0.9" height="1" fill="#B03030" opacity="0.5"/><rect x="26" y="16.2" width="0.9" height="1" fill="#B03030" opacity="0.5"/><rect x="27" y="16.2" width="0.9" height="1" fill="#B03030" opacity="0.5"/><rect x="28" y="16.2" width="0.9" height="1" fill="#B03030" opacity="0.5"/><rect x="29" y="16.2" width="0.9" height="1" fill="#B03030" opacity="0.5"/><rect x="30" y="16.2" width="0.9" height="1" fill="#B03030" opacity="0.5"/><rect x="31" y="16.2" width="0.9" height="1" fill="#B03030" opacity="0.5"/><rect x="32" y="16.2" width="0.9" height="1" fill="#B03030" opacity="0.5"/><rect x="33" y="16.2" width="0.9" height="1" fill="#B03030" opacity="0.5"/><rect x="35" y="16.2" width="0.9" height="1" fill="#444" opacity="0.4"/><rect x="8" y="18.2" width="0.9" height="1" fill="#444" opacity="0.4"/><rect x="9" y="18.2" width="0.9" height="1" fill="#666" opacity="0.4"/><rect x="8" y="20.2" width="0.9" height="1" fill="#2E6FC4" opacity="0.5"/><rect x="9" y="20.2" width="0.9" height="1" fill="#2E6FC4" opacity="0.5"/><rect x="10" y="20.2" width="0.9" height="1" fill="#2E6FC4" opacity="0.5"/><rect x="11" y="20.2" width="0.9" height="1" fill="#2E6FC4" opacity="0.5"/><rect x="12" y="20.2" width="0.9" height="1" fill="#2E6FC4" opacity="0.5"/><rect x="13" y="20.2" width="0.9" height="1" fill="#2E6FC4" opacity="0.5"/><rect x="14" y="20.2" width="0.9" height="1" fill="#2E6FC4" opacity="0.5"/><rect x="15" y="20.2" width="0.9" height="1" fill="#666" opacity="0.4"/><rect x="17" y="20.2" width="0.9" height="1" fill="#B03030" opacity="0.5"/><rect x="18" y="20.2" width="0.9" height="1" fill="#B03030" opacity="0.5"/><rect x="19" y="20.2" width="0.9" height="1" fill="#B03030" opacity="0.5"/><rect x="20" y="20.2" width="0.9" height="1" fill="#B03030" opacity="0.5"/><rect x="21" y="20.2" width="0.9" height="1" fill="#B03030" opacity="0.5"/><rect x="22" y="20.2" width="0.9" height="1" fill="#B03030" opacity="0.5"/><rect x="23" y="20.2" width="0.9" height="1" fill="#B03030" opacity="0.5"/><rect x="24" y="20.2" width="0.9" height="1" fill="#B03030" opacity="0.5"/><rect x="25" y="20.2" width="0.9" height="1" fill="#B03030" opacity="0.5"/><rect x="26" y="20.2" width="0.9" height="1" fill="#B03030" opacity="0.5"/><rect x="27" y="20.2" width="0.9" height="1" fill="#B03030" opacity="0.5"/><rect x="28" y="20.2" width="0.9" height="1" fill="#B03030" opacity="0.5"/><rect x="29" y="20.2" width="0.9" height="1" fill="#666" opacity="0.4"/><rect x="8" y="22.2" width="0.9" height="1" fill="#2E6FC4" opacity="0.5"/><rect x="9" y="22.2" width="0.9" height="1" fill="#2E6FC4" opacity="0.5"/><rect x="10" y="22.2" width="0.9" height="1" fill="#2E6FC4" opacity="0.5"/><rect x="11" y="22.2" width="0.9" height="1" fill="#2E6FC4" opacity="0.5"/><rect x="12" y="22.2" width="0.9" height="1" fill="#2E6FC4" opacity="0.5"/><rect x="13" y="22.2" width="0.9" height="1" fill="#2E6FC4" opacity="0.5"/><rect x="14" y="22.2" width="0.9" height="1" fill="#2E6FC4" opacity="0.5"/><rect x="15" y="22.2" width="0.9" height="1" fill="#2E6FC4" opacity="0.5"/><rect x="16" y="22.2" width="0.9" height="1" fill="#666" opacity="0.4"/><rect x="18" y="22.2" width="0.9" height="1" fill="#B03030" opacity="0.5"/><rect x="19" y="22.2" width="0.9" height="1" fill="#B03030" opacity="0.5"/><rect x="20" y="22.2" width="0.9" height="1" fill="#B03030" opacity="0.5"/><rect x="21" y="22.2" width="0.9" height="1" fill="#B03030" opacity="0.5"/><rect x="22" y="22.2" width="0.9" height="1" fill="#B03030" opacity="0.5"/><rect x="23" y="22.2" width="0.9" height="1" fill="#B03030" opacity="0.5"/><rect x="24" y="22.2" width="0.9" height="1" fill="#B03030" opacity="0.5"/><rect x="25" y="22.2" width="0.9" height="1" fill="#B03030" opacity="0.5"/><rect x="26" y="22.2" width="0.9" height="1" fill="#B03030" opacity="0.5"/><rect x="27" y="22.2" width="0.9" height="1" fill="#B03030" opacity="0.5"/><rect x="28" y="22.2" width="0.9" height="1" fill="#B03030" opacity="0.5"/><rect x="29" y="22.2" width="0.9" height="1" fill="#B03030" opacity="0.5"/><rect x="30" y="22.2" width="0.9" height="1" fill="#B03030" opacity="0.5"/><rect x="31" y="22.2" width="0.9" height="1" fill="#B03030" opacity="0.5"/><rect x="32" y="22.2" width="0.9" height="1" fill="#B03030" opacity="0.5"/><rect x="33" y="22.2" width="0.9" height="1" fill="#B03030" opacity="0.5"/><rect x="34" y="22.2" width="0.9" height="1" fill="#B03030" opacity="0.5"/><rect x="4" y="24.2" width="0.9" height="1" fill="#444" opacity="0.4"/><rect x="0" y="26.2" width="0.9" height="1" fill="#444" opacity="0.4"/></svg><div class="abs" style="left:1903px;top:589px;width:17px;height:404px;background:#FFFFFF;border-left:1px solid #F0F0F0"></div><div class="abs" style="left:1903px;top:589px;width:17px;height:229px;background:#C2C2C2;border-left:1px solid #ABABAB;border-top:1px solid #B5B5B5"></div><div class="abs" style="left:1909px;top:590px;width:7px;height:12px;background:#8A8A8A"></div><div class="abs" style="left:1904px;top:763px;width:16px;height:2px;background:#555555"></div><div class="abs" style="left:1909px;top:765px;width:7px;height:12px;background:#8E8E8E"></div><div id="status"><div class="abs" style="left:1756px;top:0;width:124px;height:27px;background:#C4C7CC"></div><svg class="ico" style="left:12px;top:3px" width="16" height="18" viewBox="0 0 16 18" fill="none" stroke="#3B3B3B" stroke-width="1.2" stroke-linecap="round" stroke-linejoin="round"><path d="M1.7 6.3 7.3 11.5 1.7 16.7"/><path d="M14.2 1.2 8.7 6.4 14.2 11.6"/></svg><svg class="ico" style="left:52px;top:3px" width="17" height="18" viewBox="0 0 17 18" fill="none" stroke="#3B3B3B" stroke-width="1.1" stroke-linecap="round" stroke-linejoin="round"><path d="M13.8 1.6c-2.6-.3-5 1-6.9 3.1L4.6 7.3 9.7 12.4l2.6-2.3c2.1-1.9 3.4-4.3 3.1-6.9z"/><circle cx="10.8" cy="6.2" r="1.3"/><path d="M5.6 6.2 3.3 6.3 2 8.2l2.6.9M10.8 11.4l-.1 2.3-1.9 1.3-.9-2.6M4.6 11.2l-2.4 2.4M5.8 12.5l-2.2 2.2M3.6 10.2 1.8 12"/></svg><svg class="ico" style="left:71px;top:2px" width="18" height="19" viewBox="0 0 18 19" fill="none" stroke="#3B3B3B" stroke-width="1.1" stroke-linecap="round" stroke-linejoin="round"><path d="M3.2 9.6 9.2 15.6A4.24 4.24 0 0 1 3.2 9.6Z"/><path d="M5.6 8.6 7.2 7M8.4 11.4 10 9.8M.9 17.9 3 15.8"/><path d="M8.4 6.1 12.3 10l1.9-1.9A2.76 2.76 0 0 0 10.3 4.2Z"/><path d="M14.9 3.4 17.1 1.2"/></svg><svg class="ico" style="left:187px;top:3px" width="19" height="19" viewBox="0 0 19 19" fill="none" stroke="#3B3B3B" stroke-width="1.1" stroke-linecap="round" stroke-linejoin="round"><circle cx="9.5" cy="8.9" r="8.2"/><path d="M6.2 5.6l6.6 6.6M12.8 5.6l-6.6 6.6"/></svg><svg class="ico" style="left:223px;top:2px" width="20" height="18" viewBox="0 0 20 18" fill="none" stroke="#3B3B3B" stroke-width="1.2" stroke-linecap="round" stroke-linejoin="round"><path d="M10 1.8 1.6 16.6h16.8z"/><path d="M10 6.6v4.8M10 13.4v.5"/></svg><svg class="ico" style="left:1765px;top:3px" width="22" height="19" viewBox="0 0 22 19" fill="none" stroke="#2B2B2B" stroke-width="1.8" stroke-linecap="round" stroke-linejoin="round"><rect x="3.2" y="1.3" width="7" height="6.6" rx="3.3"/><rect x="9.8" y="1.3" width="7" height="6.6" rx="3.3"/><path d="M3 8.4C1.6 9 1 10 1 11.6c0 3 3.8 5.4 9 5.4s9-2.4 9-5.4c0-1.6-.6-2.6-2-3.2"/><path d="M7.6 11v2.2M12.4 11v2.2"/></svg><svg class="ico" style="left:1891px;top:3px" width="17" height="19" viewBox="0 0 17 19" fill="none" stroke="#3B3B3B" stroke-width="1.1" stroke-linecap="round" stroke-linejoin="round"><path d="M8.5 1.5c-3 0-5 2.3-5 5.3v5.3L1.6 15h13.8l-1.9-2.9V6.8c0-3-2-5.3-5-5.3z"/><path d="M7 15.5c0 1 .6 1.7 1.5 1.7s1.5-.7 1.5-1.7"/></svg><span class="t" style="left:94.50px;top:3.97px;font-size:15.5px;line-height:17.31px;color:#474747;transform:scaleX(0.9268);">Launchpad</span><span class="t" style="left:211.00px;top:3.97px;font-size:15.5px;line-height:17.31px;color:#474747;transform:scaleX(0.8116);">0</span><span class="t" style="left:247.00px;top:3.97px;font-size:15.5px;line-height:17.31px;color:#474747;transform:scaleX(0.8928);">0</span><span class="t" style="left:1406.70px;top:3.97px;font-size:15.5px;line-height:17.31px;color:#474747;transform:scaleX(0.9371);">行 14，列 2</span><span class="t" style="left:1504.60px;top:3.97px;font-size:15.5px;line-height:17.31px;color:#474747;transform:scaleX(0.9140);">空格: 4</span><span class="t" style="left:1570.40px;top:3.97px;font-size:15.5px;line-height:17.31px;color:#474747;transform:scaleX(0.8834);">UTF-8</span><span class="t" style="left:1630.30px;top:3.97px;font-size:15.5px;line-height:17.31px;color:#474747;transform:scaleX(0.7633);">CRLF</span><span class="t" style="left:1684.60px;top:3.97px;font-size:15.5px;line-height:17.31px;color:#474747;transform:scaleX(1.0292);">{ }</span><span class="t" style="left:1709.60px;top:3.97px;font-size:15.5px;line-height:17.31px;color:#474747;transform:scaleX(0.8490);">JSON</span><span class="t" style="left:1790.00px;top:3.97px;font-size:15.5px;line-height:17.31px;color:#474747;transform:scaleX(0.9203);">Finish Setup</span></div></body></html>
